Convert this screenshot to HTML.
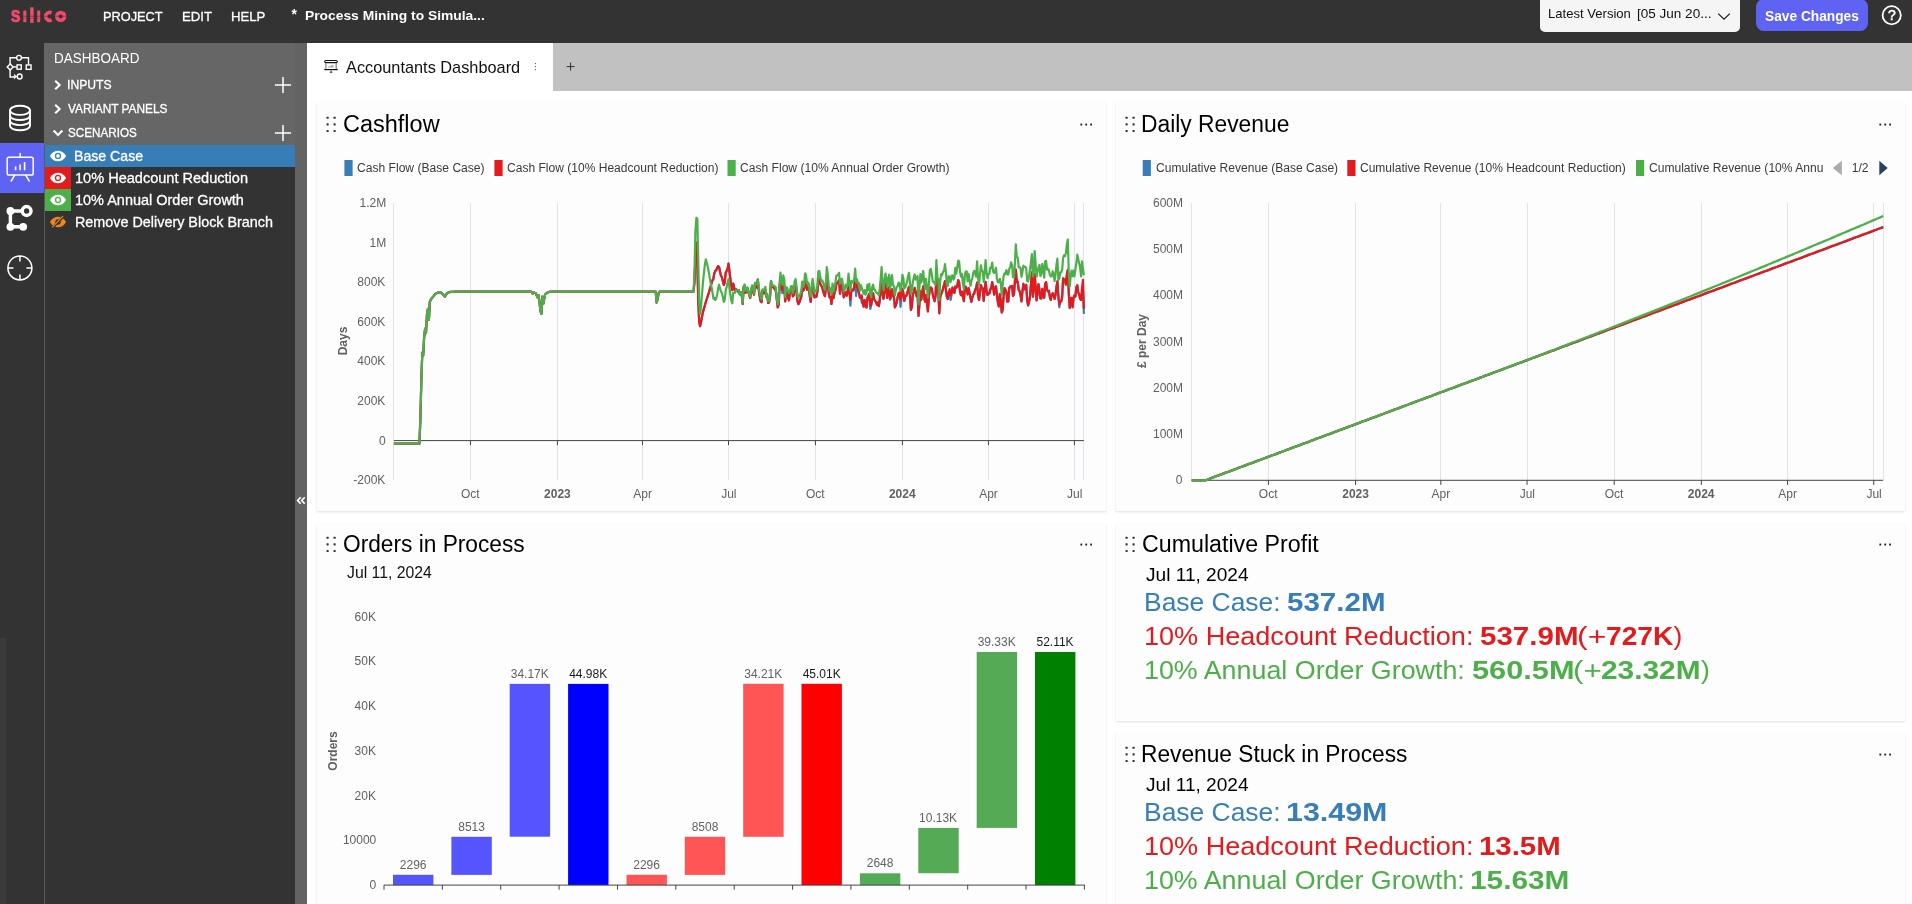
<!DOCTYPE html>
<html><head><meta charset="utf-8"><title>Accountants Dashboard</title>
<style>
html,body{margin:0;padding:0}
body{width:1912px;height:904px;overflow:hidden;position:relative;background:#fff;font-family:"Liberation Sans",sans-serif}
.box,.abs,.t,.card{position:absolute}
.t{white-space:nowrap;display:block}
.card{background:#fdfdfd;box-shadow:0 1px 2px rgba(0,0,0,0.13)}
svg{overflow:visible}
#txt{position:absolute;left:0;top:0;width:1912px;height:904px;will-change:transform}
</style></head><body>
<div class="box" style="left:0;top:0;width:1912px;height:43px;background:#333"></div>
<svg class="abs" style="left:0;top:0" width="100" height="43" viewBox="0 0 100 43">
<g fill="#f04a6e">
<text x="10.6" y="22.2" font-family="Liberation Sans" font-weight="bold" font-size="21.6" textLength="9.8" lengthAdjust="spacingAndGlyphs" stroke="#f04a6e" stroke-width="0.6">s</text>
<rect x="23.3" y="10.6" width="3.1" height="11.6"/>
<rect x="30.2" y="7.3" width="3.4" height="15.6"/>
<rect x="37.2" y="10.6" width="3.0" height="11.6"/>
</g>
<path d="M51.6 12.9 A4.0 4.0 0 1 0 51.6 19.9" fill="none" stroke="#f04a6e" stroke-width="3.6"/>
<circle cx="60.7" cy="16.4" r="3.85" fill="none" stroke="#f04a6e" stroke-width="3.7"/>
<rect x="22" y="15.85" width="46" height="0.6" fill="#333" opacity="0.85"/>
<rect x="22.8" y="18.3" width="18" height="0.45" fill="#333" opacity="0.5"/>
</svg>
<div class="box" style="left:1540px;top:-6px;width:200px;height:38px;background:#f5f5f5;border-radius:5px"></div>
<svg class="abs" style="left:1714px;top:8px" width="20" height="16" viewBox="0 0 20 16"><path d="M4.2 5.6 L10 11.2 L15.8 5.6" fill="none" stroke="#222" stroke-width="1.3"/></svg>
<div class="box" style="left:1756px;top:-1px;width:112px;height:32px;background:#5f63f3;border-radius:8px"></div>
<svg class="abs" style="left:1880px;top:3px" width="24" height="24" viewBox="0 0 24 24"><circle cx="11.7" cy="12.2" r="9.1" fill="none" stroke="#fff" stroke-width="1.8"/></svg>
<div class="box" style="left:0;top:43px;width:44px;height:861px;background:#333"></div>
<div class="box" style="left:0;top:638px;width:6px;height:266px;background:#3b3b3b"></div>
<div class="box" style="left:0;top:143px;width:44px;height:50px;background:#5f63f3"></div>
<svg class="abs" style="left:0;top:43px" width="44" height="100" viewBox="0 43 44 100" fill="none" stroke="#fff" stroke-width="1.4">
<circle cx="19" cy="57.75" r="2.4"/>
<path d="M16.6 57.75 H10.1 V64 M10.1 69.8 V77 H14.4"/>
<path d="M10.2 63.9 L13.2 66.9 L10.2 69.9 L7.2 66.9 Z"/>
<path d="M13.2 66.9 H16.8"/>
<rect x="17.05" y="64.9" width="4.2" height="4.3"/>
<path d="M21.4 57.75 H28.5 V64.6"/>
<rect x="26.25" y="64.95" width="4.8" height="4.4"/>
<ellipse cx="19.65" cy="76.5" rx="2.4" ry="2.5"/>
<path d="M14.3 74.4 V78.8 L16.9 76.6 Z" fill="#fff" stroke-width="0.6"/>
</svg>
<svg class="abs" style="left:0;top:43px" width="44" height="100" viewBox="0 43 44 100" fill="none" stroke="#fff" stroke-width="1.9">
<ellipse cx="20" cy="110.3" rx="10" ry="4.6"/>
<path d="M10 110.3 V125.6 C10 131.7 30 131.7 30 125.6 V110.3"/>
<path d="M10 115.4 C10 121.5 30 121.5 30 115.4"/>
<path d="M10 120.5 C10 126.6 30 126.6 30 120.5"/>
</svg>
<svg class="abs" style="left:0;top:143px" width="44" height="50" viewBox="0 143 44 50" fill="none" stroke="#fff" stroke-width="1.5" stroke-linecap="round">
<rect x="7.2" y="157.2" width="26" height="17.8" rx="1.8"/>
<path d="M20.2 153.4 V157"/>
<path d="M14.6 175.4 L11.2 181 M25.8 175.4 L29.2 181"/>
<path d="M15.6 170.2 V166.4 M20.1 170.2 V164.6 M24.6 170.2 V162" stroke-width="1.6" stroke-linecap="butt"/>
</svg>
<svg class="abs" style="left:0;top:193px" width="44" height="50" viewBox="0 193 44 50" fill="#fff" stroke="#fff">
<path d="M10.4 211 V226.8 H23.2 M10.4 211 H21" fill="none" stroke-width="3.4"/>
<circle cx="10.4" cy="211" r="3.9" stroke="none"/><circle cx="10.4" cy="226.8" r="3.9" stroke="none"/><circle cx="23.2" cy="226.8" r="3.9" stroke="none"/>
<circle cx="26.6" cy="211" r="4.4" fill="none" stroke-width="3.5"/>
</svg>
<svg class="abs" style="left:0;top:243px" width="44" height="50" viewBox="0 243 44 50" fill="none" stroke="#fff" stroke-width="1.5">
<circle cx="19.9" cy="267.9" r="12"/>
<path d="M19.9 256 V261.4 M19.9 274.4 V279.8 M8 267.9 H13.4 M26.4 267.9 H31.8"/>
</svg>
<div class="box" style="left:44px;top:43px;width:263px;height:861px;background:#666"></div>
<div class="box" style="left:295px;top:43px;width:12px;height:861px;background:#636363"></div>
<div class="box" style="left:44px;top:145px;width:251px;height:759px;background:#333"></div>
<div class="box" style="left:44px;top:145px;width:1px;height:759px;background:#5a5a5a"></div>
<svg class="abs" style="left:51.5px;top:78.6px" width="12" height="12" viewBox="0 0 12 12"><path d="M3.2 1.8 L7.6 6 L3.2 10.2" fill="none" stroke="#fff" stroke-width="2.1"/></svg>
<svg class="abs" style="left:274px;top:75.8px" width="18" height="18" viewBox="0 0 18 18"><path d="M9 0.9 V17.1 M0.9 9 H17.1" fill="none" stroke="#fff" stroke-width="1.5"/></svg>
<svg class="abs" style="left:51.5px;top:102.6px" width="12" height="12" viewBox="0 0 12 12"><path d="M3.2 1.8 L7.6 6 L3.2 10.2" fill="none" stroke="#fff" stroke-width="2.1"/></svg>
<svg class="abs" style="left:51.5px;top:126.6px" width="12" height="12" viewBox="0 0 12 12"><path d="M1.6 3.6 L6 8 L10.4 3.6" fill="none" stroke="#fff" stroke-width="2.1"/></svg>
<svg class="abs" style="left:274px;top:123.6px" width="18" height="18" viewBox="0 0 18 18"><path d="M9 0.9 V17.1 M0.9 9 H17.1" fill="none" stroke="#fff" stroke-width="1.5"/></svg>
<div class="box" style="left:45px;top:145px;width:250px;height:22px;background:#377eb8"></div>
<div class="box" style="left:45px;top:167px;width:26px;height:22px;background:#e41a1c"></div>
<div class="box" style="left:45px;top:189px;width:26px;height:22px;background:#4daf4a"></div>
<svg class="abs" style="left:49px;top:148px" width="18" height="16" viewBox="0 0 18 16">
<path d="M0.9 8 C3.2 4 6 2.7 9 2.7 C12 2.7 14.8 4 17.1 8 C14.8 12 12 13.3 9 13.3 C6 13.3 3.2 12 0.9 8 Z" fill="#fff"/>
<circle cx="9" cy="7.9" r="2.5" fill="none" stroke="#377eb8" stroke-width="1.3"/></svg>
<svg class="abs" style="left:49px;top:170px" width="18" height="16" viewBox="0 0 18 16">
<path d="M0.9 8 C3.2 4 6 2.7 9 2.7 C12 2.7 14.8 4 17.1 8 C14.8 12 12 13.3 9 13.3 C6 13.3 3.2 12 0.9 8 Z" fill="#fff"/>
<circle cx="9" cy="7.9" r="2.5" fill="none" stroke="#e41a1c" stroke-width="1.3"/></svg>
<svg class="abs" style="left:49px;top:192px" width="18" height="16" viewBox="0 0 18 16">
<path d="M0.9 8 C3.2 4 6 2.7 9 2.7 C12 2.7 14.8 4 17.1 8 C14.8 12 12 13.3 9 13.3 C6 13.3 3.2 12 0.9 8 Z" fill="#fff"/>
<circle cx="9" cy="7.9" r="2.5" fill="none" stroke="#4daf4a" stroke-width="1.3"/></svg>
<svg class="abs" style="left:49px;top:214px" width="18" height="16" viewBox="0 0 18 16">
<path d="M0.9 8 C3.2 4 6 2.7 9 2.7 C12 2.7 14.8 4 17.1 8 C14.8 12 12 13.3 9 13.3 C6 13.3 3.2 12 0.9 8 Z" fill="#f0861a"/>
<circle cx="9" cy="8" r="2.7" fill="#333"/>
<path d="M3.4 13.9 L14.6 2.1" stroke="#333" stroke-width="2.6"/><path d="M3.2 13.3 L14.2 1.9" stroke="#f0861a" stroke-width="1.1"/></svg>
<svg class="abs" style="left:290px;top:490px" width="20" height="20" viewBox="290 490 20 20" fill="none" stroke="#fff" stroke-width="1.7"><path d="M300.7 497.2 L297.7 500.5 L300.7 503.8 M304.7 497.2 L301.7 500.5 L304.7 503.8"/></svg>
<div class="box" style="left:307px;top:43px;width:1605px;height:48px;background:#c1c1c1"></div>
<div class="box" style="left:307px;top:43px;width:246px;height:48px;background:#fff"></div>
<svg class="abs" style="left:316px;top:52px" width="40" height="30" viewBox="316 52 40 30" fill="none">
<rect x="324.7" y="60.5" width="12.6" height="2.1" rx="1.05" stroke="#111" stroke-width="1.1"/>
<path d="M325.9 63 V69.2 M336.2 63 V69.2" stroke="#8a8a8a" stroke-width="1.3"/>
<path d="M324.3 69.6 H337.8" stroke="#111" stroke-width="1.2"/>
<path d="M328.6 67.4 V66.6 M330 67.4 V66.2 M331.4 67.4 V65.6 M332.8 67.4 V65" stroke="#999" stroke-width="1.2"/>
<path d="M331.1 70.2 L329.5 72.4 A1.7 1.1 0 0 0 332.7 72.4 Z" fill="#6a6a6a"/>
</svg>
<svg class="abs" style="left:533px;top:60px" width="5" height="14" viewBox="0 0 5 14" fill="#444"><circle cx="2.4" cy="3.6" r="0.65"/><circle cx="2.4" cy="6.6" r="0.65"/><circle cx="2.4" cy="9.6" r="0.65"/></svg>
<svg class="abs" style="left:565px;top:61px" width="12" height="12" viewBox="0 0 12 12"><path d="M5.6 1.6 V9.6 M1.6 5.6 H9.6" stroke="#222" stroke-width="0.9" fill="none"/></svg>
<div class="card" style="left:317px;top:102px;width:789px;height:409px"></div>
<div class="card" style="left:1116px;top:102px;width:789px;height:409px"></div>
<div class="card" style="left:317px;top:523px;width:789px;height:400px"></div>
<div class="card" style="left:1116px;top:523px;width:789px;height:198px"></div>
<div class="card" style="left:1116px;top:733px;width:789px;height:200px"></div>
<svg class="abs" style="left:325.6px;top:116px" width="11" height="17" viewBox="0 0 11 17" fill="#333"><rect x="0.55" y="0.75" width="2.1" height="2.1" rx="0.4"/><rect x="0.55" y="7.3500000000000005" width="2.1" height="2.1" rx="0.4"/><rect x="0.55" y="13.95" width="2.1" height="2.1" rx="0.4"/><rect x="7.55" y="0.75" width="2.1" height="2.1" rx="0.4"/><rect x="7.55" y="7.3500000000000005" width="2.1" height="2.1" rx="0.4"/><rect x="7.55" y="13.95" width="2.1" height="2.1" rx="0.4"/></svg>
<svg class="abs" style="left:1080.0px;top:122.7px" width="14" height="4" viewBox="0 0 14 4" fill="#222"><rect x="0.4" y="0.6" width="1.8" height="1.9"/><rect x="5.3" y="0.6" width="1.8" height="1.9"/><rect x="10.2" y="0.6" width="1.8" height="1.9"/></svg>
<svg class="abs" style="left:1124.6px;top:116px" width="11" height="17" viewBox="0 0 11 17" fill="#333"><rect x="0.55" y="0.75" width="2.1" height="2.1" rx="0.4"/><rect x="0.55" y="7.3500000000000005" width="2.1" height="2.1" rx="0.4"/><rect x="0.55" y="13.95" width="2.1" height="2.1" rx="0.4"/><rect x="7.55" y="0.75" width="2.1" height="2.1" rx="0.4"/><rect x="7.55" y="7.3500000000000005" width="2.1" height="2.1" rx="0.4"/><rect x="7.55" y="13.95" width="2.1" height="2.1" rx="0.4"/></svg>
<svg class="abs" style="left:1879.4px;top:122.7px" width="14" height="4" viewBox="0 0 14 4" fill="#222"><rect x="0.4" y="0.6" width="1.8" height="1.9"/><rect x="5.3" y="0.6" width="1.8" height="1.9"/><rect x="10.2" y="0.6" width="1.8" height="1.9"/></svg>
<svg class="abs" style="left:325.6px;top:536px" width="11" height="17" viewBox="0 0 11 17" fill="#333"><rect x="0.55" y="0.75" width="2.1" height="2.1" rx="0.4"/><rect x="0.55" y="7.3500000000000005" width="2.1" height="2.1" rx="0.4"/><rect x="0.55" y="13.95" width="2.1" height="2.1" rx="0.4"/><rect x="7.55" y="0.75" width="2.1" height="2.1" rx="0.4"/><rect x="7.55" y="7.3500000000000005" width="2.1" height="2.1" rx="0.4"/><rect x="7.55" y="13.95" width="2.1" height="2.1" rx="0.4"/></svg>
<svg class="abs" style="left:1080.0px;top:542.7px" width="14" height="4" viewBox="0 0 14 4" fill="#222"><rect x="0.4" y="0.6" width="1.8" height="1.9"/><rect x="5.3" y="0.6" width="1.8" height="1.9"/><rect x="10.2" y="0.6" width="1.8" height="1.9"/></svg>
<svg class="abs" style="left:1124.6px;top:536px" width="11" height="17" viewBox="0 0 11 17" fill="#333"><rect x="0.55" y="0.75" width="2.1" height="2.1" rx="0.4"/><rect x="0.55" y="7.3500000000000005" width="2.1" height="2.1" rx="0.4"/><rect x="0.55" y="13.95" width="2.1" height="2.1" rx="0.4"/><rect x="7.55" y="0.75" width="2.1" height="2.1" rx="0.4"/><rect x="7.55" y="7.3500000000000005" width="2.1" height="2.1" rx="0.4"/><rect x="7.55" y="13.95" width="2.1" height="2.1" rx="0.4"/></svg>
<svg class="abs" style="left:1879.4px;top:542.7px" width="14" height="4" viewBox="0 0 14 4" fill="#222"><rect x="0.4" y="0.6" width="1.8" height="1.9"/><rect x="5.3" y="0.6" width="1.8" height="1.9"/><rect x="10.2" y="0.6" width="1.8" height="1.9"/></svg>
<svg class="abs" style="left:1124.6px;top:746px" width="11" height="17" viewBox="0 0 11 17" fill="#333"><rect x="0.55" y="0.75" width="2.1" height="2.1" rx="0.4"/><rect x="0.55" y="7.3500000000000005" width="2.1" height="2.1" rx="0.4"/><rect x="0.55" y="13.95" width="2.1" height="2.1" rx="0.4"/><rect x="7.55" y="0.75" width="2.1" height="2.1" rx="0.4"/><rect x="7.55" y="7.3500000000000005" width="2.1" height="2.1" rx="0.4"/><rect x="7.55" y="13.95" width="2.1" height="2.1" rx="0.4"/></svg>
<svg class="abs" style="left:1879.4px;top:752.7px" width="14" height="4" viewBox="0 0 14 4" fill="#222"><rect x="0.4" y="0.6" width="1.8" height="1.9"/><rect x="5.3" y="0.6" width="1.8" height="1.9"/><rect x="10.2" y="0.6" width="1.8" height="1.9"/></svg>
<svg class="abs" style="left:317px;top:102px" width="789" height="409" viewBox="317 102 789 409">
<rect x="344.4" y="160" width="8.2" height="16" fill="#377eb8"/>
<rect x="494.4" y="160" width="8.2" height="16" fill="#e41a1c"/>
<rect x="727.5" y="160" width="8.2" height="16" fill="#4daf4a"/>
<path d="M393.5 203 V480.3" stroke="#e1e3e8" stroke-width="1"/>
<path d="M470.5 203 V480.3" stroke="#e1e3e8" stroke-width="1"/>
<path d="M557.5 203 V480.3" stroke="#e1e3e8" stroke-width="1"/>
<path d="M642.5 203 V480.3" stroke="#e1e3e8" stroke-width="1"/>
<path d="M728.5 203 V480.3" stroke="#e1e3e8" stroke-width="1"/>
<path d="M815.5 203 V480.3" stroke="#e1e3e8" stroke-width="1"/>
<path d="M902.5 203 V480.3" stroke="#e1e3e8" stroke-width="1"/>
<path d="M988.5 203 V480.3" stroke="#e1e3e8" stroke-width="1"/>
<path d="M1074.5 203 V480.3" stroke="#e1e3e8" stroke-width="1"/>
<path d="M1083.5 203 V480.3" stroke="#e1e3e8" stroke-width="1"/>
<path d="M393.9 440.6 H1083.9" stroke="#444" stroke-width="1"/>
<path d="M470.46 440.6 V445.20000000000005" stroke="#444" stroke-width="1"/>
<path d="M557.42 440.6 V445.20000000000005" stroke="#444" stroke-width="1"/>
<path d="M642.49 440.6 V445.20000000000005" stroke="#444" stroke-width="1"/>
<path d="M728.50 440.6 V445.20000000000005" stroke="#444" stroke-width="1"/>
<path d="M815.46 440.6 V445.20000000000005" stroke="#444" stroke-width="1"/>
<path d="M902.42 440.6 V445.20000000000005" stroke="#444" stroke-width="1"/>
<path d="M988.43 440.6 V445.20000000000005" stroke="#444" stroke-width="1"/>
<path d="M1074.44 440.6 V445.20000000000005" stroke="#444" stroke-width="1"/>
<polyline points="393.9,443.6 394.8,443.6 395.8,443.6 396.7,443.6 397.7,443.6 398.6,443.6 399.6,443.6 400.5,443.6 401.5,443.6 402.4,443.6 403.4,443.6 404.3,443.6 405.2,443.6 406.2,443.6 407.1,443.6 408.1,443.6 409.0,443.6 410.0,443.6 410.9,443.6 411.9,443.6 412.8,443.6 413.7,443.6 414.7,443.6 415.6,443.6 416.6,443.6 417.5,443.6 418.5,443.6 419.4,443.6 420.4,418.8 421.3,381.2 422.3,352.5 423.2,355.5 424.1,337.6 425.1,328.7 426.0,332.7 427.0,313.9 427.9,308.9 428.9,319.8 429.8,302.0 430.8,299.6 431.7,298.4 432.7,297.2 433.6,296.1 434.5,294.9 435.5,293.7 436.4,293.3 437.4,292.9 438.3,292.5 439.3,292.6 440.2,292.6 441.2,292.7 442.1,293.6 443.1,294.5 444.0,295.6 444.9,296.7 445.9,294.5 446.8,293.6 447.8,292.7 448.7,292.4 449.7,292.2 450.6,291.9 451.6,291.9 452.5,291.8 453.4,291.8 454.4,291.7 455.3,291.7 456.3,291.7 457.2,291.7 458.2,291.7 459.1,291.7 460.1,291.7 461.0,291.7 462.0,291.7 462.9,291.7 463.8,291.7 464.8,291.7 465.7,291.7 466.7,291.7 467.6,291.7 468.6,291.7 469.5,291.7 470.5,291.7 471.4,291.7 472.4,291.7 473.3,291.7 474.2,291.7 475.2,291.7 476.1,291.7 477.1,291.7 478.0,291.7 479.0,291.7 479.9,291.7 480.9,291.7 481.8,291.7 482.7,291.7 483.7,291.7 484.6,291.7 485.6,291.7 486.5,291.7 487.5,291.7 488.4,291.7 489.4,291.7 490.3,291.7 491.3,291.7 492.2,291.7 493.1,291.7 494.1,291.7 495.0,291.7 496.0,291.7 496.9,291.7 497.9,291.7 498.8,291.7 499.8,291.7 500.7,291.7 501.7,291.7 502.6,291.7 503.5,291.7 504.5,291.7 505.4,291.7 506.4,291.7 507.3,291.7 508.3,291.7 509.2,291.7 510.2,291.7 511.1,291.7 512.0,291.7 513.0,291.7 513.9,291.7 514.9,291.7 515.8,291.7 516.8,291.7 517.7,291.7 518.7,291.7 519.6,291.7 520.6,291.7 521.5,291.7 522.4,291.7 523.4,291.7 524.3,291.7 525.3,291.7 526.2,291.7 527.2,291.7 528.1,291.7 529.1,291.7 530.0,291.7 531.0,291.7 531.9,292.1 532.8,293.7 533.8,292.5 534.7,292.8 535.7,293.1 536.6,295.4 537.6,297.6 538.5,295.1 539.5,302.0 540.4,310.9 541.4,313.9 542.3,296.5 543.2,304.0 544.2,299.0 545.1,294.5 546.1,293.6 547.0,292.7 548.0,292.4 548.9,292.0 549.9,291.7 550.8,291.7 551.7,291.7 552.7,291.7 553.6,291.7 554.6,291.7 555.5,291.7 556.5,291.7 557.4,291.7 558.4,291.7 559.3,291.7 560.3,291.7 561.2,291.7 562.1,291.7 563.1,291.7 564.0,291.7 565.0,291.7 565.9,291.7 566.9,291.7 567.8,291.7 568.8,291.7 569.7,291.7 570.7,291.7 571.6,291.7 572.5,291.7 573.5,291.7 574.4,291.7 575.4,291.7 576.3,291.7 577.3,291.7 578.2,291.7 579.2,291.7 580.1,291.7 581.0,291.7 582.0,291.7 582.9,291.7 583.9,291.7 584.8,291.7 585.8,291.7 586.7,291.7 587.7,291.7 588.6,291.7 589.6,291.7 590.5,291.7 591.4,291.7 592.4,291.7 593.3,291.7 594.3,291.7 595.2,291.7 596.2,291.7 597.1,291.7 598.1,291.7 599.0,291.7 600.0,291.7 600.9,291.7 601.8,291.7 602.8,291.7 603.7,291.7 604.7,291.7 605.6,291.7 606.6,291.7 607.5,291.7 608.5,291.7 609.4,291.7 610.4,291.7 611.3,291.7 612.2,291.7 613.2,291.7 614.1,291.7 615.1,291.7 616.0,291.7 617.0,291.7 617.9,291.7 618.9,291.7 619.8,291.7 620.7,291.7 621.7,291.7 622.6,291.7 623.6,291.7 624.5,291.7 625.5,291.7 626.4,291.7 627.4,291.7 628.3,291.7 629.3,291.7 630.2,291.7 631.1,291.7 632.1,291.7 633.0,291.7 634.0,291.7 634.9,291.7 635.9,291.7 636.8,291.7 637.8,291.7 638.7,291.7 639.7,291.7 640.6,291.7 641.5,291.7 642.5,291.7 643.4,291.7 644.4,291.7 645.3,291.7 646.3,291.7 647.2,291.7 648.2,291.7 649.1,291.7 650.0,291.7 651.0,291.7 651.9,291.7 652.9,291.7 653.8,291.7 654.8,291.7 655.7,291.7 656.7,302.6 657.6,299.0 658.6,293.1 659.5,291.7 660.4,291.7 661.4,291.7 662.3,291.7 663.3,291.7 664.2,291.7 665.2,291.7 666.1,291.7 667.1,291.7 668.0,291.7 669.0,291.7 669.9,291.7 670.8,291.7 671.8,291.7 672.7,291.7 673.7,291.7 674.6,291.7 675.6,291.7 676.5,291.7 677.5,291.7 678.4,291.7 679.4,291.7 680.3,291.7 681.2,291.7 682.2,291.7 683.1,291.7 684.1,291.7 685.0,291.7 686.0,291.7 686.9,291.7 687.9,291.7 688.8,291.7 689.7,291.7 690.7,291.7 691.6,291.7 692.6,291.7 693.5,291.7 694.5,282.2 695.4,254.5 696.4,242.6 697.3,262.4 698.3,302.0 699.2,321.8 700.1,326.2 701.1,321.8 702.0,316.9 703.0,311.9 703.9,308.6 704.9,305.3 705.8,302.0 706.8,299.0 707.7,296.1 708.7,293.1 709.6,290.1 710.5,287.0 711.5,283.4 712.4,280.3 713.4,278.8 714.3,273.3 715.3,270.8 716.2,270.3 717.2,267.7 718.1,266.2 719.0,266.8 720.0,271.4 720.9,275.5 721.9,277.2 722.8,280.9 723.8,285.0 724.7,282.6 725.7,272.6 726.6,271.0 727.6,268.6 728.5,263.7 729.4,270.6 730.4,279.2 731.3,286.4 732.3,290.1 733.2,283.6 734.2,287.6 735.1,290.6 736.1,289.4 737.0,289.7 738.0,292.1 738.9,290.1 739.8,294.2 740.8,292.3 741.7,294.4 742.7,304.0 743.6,287.2 744.6,286.1 745.5,292.9 746.5,291.5 747.4,288.4 748.3,291.6 749.3,295.4 750.2,297.8 751.2,290.0 752.1,287.6 753.1,291.8 754.0,294.6 755.0,283.9 755.9,286.5 756.9,287.6 757.8,279.7 758.7,289.3 759.7,296.4 760.6,301.1 761.6,302.1 762.5,290.6 763.5,292.3 764.4,293.4 765.4,289.9 766.3,296.6 767.3,296.1 768.2,303.0 769.1,302.1 770.1,296.1 771.0,281.4 772.0,286.0 772.9,287.2 773.9,287.6 774.8,289.2 775.8,290.3 776.7,298.5 777.7,307.3 778.6,305.1 779.5,288.5 780.5,277.3 781.4,286.4 782.4,293.2 783.3,281.6 784.3,286.1 785.2,301.5 786.2,290.8 787.1,293.1 788.0,297.7 789.0,300.3 789.9,293.0 790.9,289.1 791.8,286.6 792.8,296.3 793.7,295.4 794.7,285.9 795.6,283.8 796.6,293.0 797.5,301.5 798.4,304.1 799.4,302.3 800.3,299.6 801.3,296.8 802.2,287.2 803.2,290.6 804.1,289.3 805.1,280.4 806.0,280.9 807.0,289.6 807.9,289.4 808.8,287.9 809.8,296.1 810.7,301.9 811.7,290.6 812.6,284.7 813.6,290.0 814.5,297.3 815.5,297.0 816.4,296.9 817.3,292.4 818.3,281.6 819.2,278.5 820.2,283.3 821.1,285.7 822.1,286.7 823.0,290.6 824.0,294.0 824.9,296.2 825.9,288.5 826.8,276.4 827.7,282.1 828.7,292.8 829.6,297.4 830.6,297.0 831.5,304.0 832.5,291.8 833.4,298.2 834.4,293.4 835.3,290.5 836.3,284.0 837.2,283.2 838.1,281.9 839.1,280.2 840.0,293.7 841.0,287.9 841.9,283.2 842.9,288.6 843.8,297.3 844.8,293.4 845.7,292.1 846.7,295.8 847.6,292.5 848.5,280.9 849.5,292.1 850.4,305.6 851.4,289.8 852.3,289.9 853.3,290.4 854.2,286.5 855.2,278.7 856.1,296.0 857.0,285.0 858.0,289.9 858.9,292.5 859.9,297.6 860.8,296.3 861.8,302.7 862.7,303.4 863.7,306.6 864.6,300.2 865.6,305.9 866.5,307.6 867.4,298.7 868.4,295.9 869.3,293.7 870.3,308.9 871.2,305.1 872.2,299.1 873.1,293.3 874.1,299.2 875.0,300.8 876.0,301.9 876.9,304.7 877.8,302.6 878.8,306.2 879.7,302.6 880.7,288.5 881.6,282.5 882.6,294.8 883.5,298.8 884.5,291.5 885.4,283.7 886.3,288.7 887.3,297.9 888.2,290.8 889.2,286.8 890.1,299.3 891.1,297.3 892.0,289.4 893.0,296.0 893.9,296.5 894.9,307.4 895.8,305.5 896.7,302.5 897.7,296.9 898.6,293.6 899.6,292.5 900.5,306.8 901.5,296.6 902.4,290.6 903.4,293.2 904.3,301.0 905.3,296.0 906.2,296.1 907.1,293.6 908.1,289.7 909.0,286.8 910.0,296.2 910.9,310.0 911.9,306.6 912.8,294.6 913.8,292.1 914.7,287.9 915.7,292.3 916.6,296.2 917.5,292.7 918.5,316.0 919.4,304.3 920.4,291.3 921.3,299.7 922.3,292.6 923.2,286.3 924.2,299.2 925.1,301.7 926.0,295.1 927.0,303.6 927.9,311.3 928.9,297.1 929.8,288.5 930.8,287.4 931.7,288.4 932.7,294.3 933.6,298.0 934.6,301.3 935.5,296.1 936.4,275.0 937.4,293.8 938.3,291.7 939.3,313.3 940.2,297.5 941.2,294.0 942.1,291.9 943.1,288.4 944.0,285.1 945.0,281.0 945.9,289.6 946.8,296.5 947.8,299.0 948.7,292.6 949.7,292.0 950.6,300.0 951.6,294.8 952.5,287.5 953.5,292.0 954.4,292.9 955.3,286.5 956.3,287.6 957.2,287.0 958.2,280.2 959.1,282.2 960.1,292.3 961.0,295.2 962.0,291.5 962.9,296.7 963.9,301.1 964.8,288.3 965.7,286.6 966.7,290.0 967.6,294.3 968.6,288.0 969.5,292.7 970.5,297.7 971.4,301.8 972.4,297.3 973.3,294.5 974.3,294.2 975.2,289.6 976.1,288.2 977.1,282.7 978.0,295.4 979.0,300.0 979.9,293.4 980.9,285.2 981.8,288.0 982.8,288.5 983.7,300.9 984.6,291.7 985.6,281.9 986.5,289.7 987.5,295.0 988.4,293.2 989.4,293.4 990.3,289.7 991.3,287.5 992.2,282.2 993.2,287.6 994.1,294.5 995.0,288.1 996.0,286.3 996.9,295.0 997.9,302.7 998.8,306.4 999.8,294.0 1000.7,299.5 1001.7,312.5 1002.6,310.1 1003.6,296.4 1004.5,288.1 1005.4,289.6 1006.4,292.1 1007.3,301.6 1008.3,301.5 1009.2,288.3 1010.2,286.5 1011.1,287.4 1012.1,285.9 1013.0,295.8 1014.0,294.7 1014.9,281.1 1015.8,269.7 1016.8,282.2 1017.7,281.7 1018.7,290.0 1019.6,291.0 1020.6,295.5 1021.5,301.3 1022.5,290.9 1023.4,283.8 1024.3,289.5 1025.3,287.9 1026.2,284.8 1027.2,300.6 1028.1,305.4 1029.1,301.8 1030.0,296.5 1031.0,283.6 1031.9,272.4 1032.9,296.7 1033.8,288.9 1034.7,274.1 1035.7,288.5 1036.6,300.3 1037.6,288.2 1038.5,284.2 1039.5,296.1 1040.4,298.3 1041.4,298.4 1042.3,288.9 1043.3,292.9 1044.2,297.8 1045.1,284.1 1046.1,282.1 1047.0,290.0 1048.0,291.5 1048.9,290.7 1049.9,297.4 1050.8,299.9 1051.8,295.1 1052.7,293.3 1053.6,295.0 1054.6,299.0 1055.5,295.0 1056.5,286.6 1057.4,281.4 1058.4,296.5 1059.3,307.2 1060.3,301.6 1061.2,301.5 1062.2,296.5 1063.1,278.3 1064.0,280.1 1065.0,281.7 1065.9,284.6 1066.9,274.3 1067.8,269.9 1068.8,293.6 1069.7,307.9 1070.7,304.1 1071.6,298.4 1072.6,307.4 1073.5,298.2 1074.4,295.4 1075.4,296.5 1076.3,287.5 1077.3,285.3 1078.2,292.6 1079.2,294.2 1080.1,298.9 1081.1,299.9 1082.0,293.3 1083.0,290.9 1083.9,313.9" fill="none" stroke="#377eb8" stroke-width="2.2" stroke-linejoin="round"/>
<polyline points="393.9,443.6 394.8,443.6 395.8,443.6 396.7,443.6 397.7,443.6 398.6,443.6 399.6,443.6 400.5,443.6 401.5,443.6 402.4,443.6 403.4,443.6 404.3,443.6 405.2,443.6 406.2,443.6 407.1,443.6 408.1,443.6 409.0,443.6 410.0,443.6 410.9,443.6 411.9,443.6 412.8,443.6 413.7,443.6 414.7,443.6 415.6,443.6 416.6,443.6 417.5,443.6 418.5,443.6 419.4,443.6 420.4,418.8 421.3,381.2 422.3,352.5 423.2,355.5 424.1,337.6 425.1,328.7 426.0,332.7 427.0,313.9 427.9,308.9 428.9,319.8 429.8,302.0 430.8,299.6 431.7,298.4 432.7,297.2 433.6,296.1 434.5,294.9 435.5,293.7 436.4,293.3 437.4,292.9 438.3,292.5 439.3,292.6 440.2,292.6 441.2,292.7 442.1,293.6 443.1,294.5 444.0,295.6 444.9,296.7 445.9,294.5 446.8,293.6 447.8,292.7 448.7,292.4 449.7,292.2 450.6,291.9 451.6,291.9 452.5,291.8 453.4,291.8 454.4,291.7 455.3,291.7 456.3,291.7 457.2,291.7 458.2,291.7 459.1,291.7 460.1,291.7 461.0,291.7 462.0,291.7 462.9,291.7 463.8,291.7 464.8,291.7 465.7,291.7 466.7,291.7 467.6,291.7 468.6,291.7 469.5,291.7 470.5,291.7 471.4,291.7 472.4,291.7 473.3,291.7 474.2,291.7 475.2,291.7 476.1,291.7 477.1,291.7 478.0,291.7 479.0,291.7 479.9,291.7 480.9,291.7 481.8,291.7 482.7,291.7 483.7,291.7 484.6,291.7 485.6,291.7 486.5,291.7 487.5,291.7 488.4,291.7 489.4,291.7 490.3,291.7 491.3,291.7 492.2,291.7 493.1,291.7 494.1,291.7 495.0,291.7 496.0,291.7 496.9,291.7 497.9,291.7 498.8,291.7 499.8,291.7 500.7,291.7 501.7,291.7 502.6,291.7 503.5,291.7 504.5,291.7 505.4,291.7 506.4,291.7 507.3,291.7 508.3,291.7 509.2,291.7 510.2,291.7 511.1,291.7 512.0,291.7 513.0,291.7 513.9,291.7 514.9,291.7 515.8,291.7 516.8,291.7 517.7,291.7 518.7,291.7 519.6,291.7 520.6,291.7 521.5,291.7 522.4,291.7 523.4,291.7 524.3,291.7 525.3,291.7 526.2,291.7 527.2,291.7 528.1,291.7 529.1,291.7 530.0,291.7 531.0,291.7 531.9,292.1 532.8,293.7 533.8,292.5 534.7,292.8 535.7,293.1 536.6,295.4 537.6,297.6 538.5,295.1 539.5,302.0 540.4,310.9 541.4,313.9 542.3,296.5 543.2,304.0 544.2,299.0 545.1,294.5 546.1,293.6 547.0,292.7 548.0,292.4 548.9,292.0 549.9,291.7 550.8,291.7 551.7,291.7 552.7,291.7 553.6,291.7 554.6,291.7 555.5,291.7 556.5,291.7 557.4,291.7 558.4,291.7 559.3,291.7 560.3,291.7 561.2,291.7 562.1,291.7 563.1,291.7 564.0,291.7 565.0,291.7 565.9,291.7 566.9,291.7 567.8,291.7 568.8,291.7 569.7,291.7 570.7,291.7 571.6,291.7 572.5,291.7 573.5,291.7 574.4,291.7 575.4,291.7 576.3,291.7 577.3,291.7 578.2,291.7 579.2,291.7 580.1,291.7 581.0,291.7 582.0,291.7 582.9,291.7 583.9,291.7 584.8,291.7 585.8,291.7 586.7,291.7 587.7,291.7 588.6,291.7 589.6,291.7 590.5,291.7 591.4,291.7 592.4,291.7 593.3,291.7 594.3,291.7 595.2,291.7 596.2,291.7 597.1,291.7 598.1,291.7 599.0,291.7 600.0,291.7 600.9,291.7 601.8,291.7 602.8,291.7 603.7,291.7 604.7,291.7 605.6,291.7 606.6,291.7 607.5,291.7 608.5,291.7 609.4,291.7 610.4,291.7 611.3,291.7 612.2,291.7 613.2,291.7 614.1,291.7 615.1,291.7 616.0,291.7 617.0,291.7 617.9,291.7 618.9,291.7 619.8,291.7 620.7,291.7 621.7,291.7 622.6,291.7 623.6,291.7 624.5,291.7 625.5,291.7 626.4,291.7 627.4,291.7 628.3,291.7 629.3,291.7 630.2,291.7 631.1,291.7 632.1,291.7 633.0,291.7 634.0,291.7 634.9,291.7 635.9,291.7 636.8,291.7 637.8,291.7 638.7,291.7 639.7,291.7 640.6,291.7 641.5,291.7 642.5,291.7 643.4,291.7 644.4,291.7 645.3,291.7 646.3,291.7 647.2,291.7 648.2,291.7 649.1,291.7 650.0,291.7 651.0,291.7 651.9,291.7 652.9,291.7 653.8,291.7 654.8,291.7 655.7,291.7 656.7,302.6 657.6,299.0 658.6,293.1 659.5,291.7 660.4,291.7 661.4,291.7 662.3,291.7 663.3,291.7 664.2,291.7 665.2,291.7 666.1,291.7 667.1,291.7 668.0,291.7 669.0,291.7 669.9,291.7 670.8,291.7 671.8,291.7 672.7,291.7 673.7,291.7 674.6,291.7 675.6,291.7 676.5,291.7 677.5,291.7 678.4,291.7 679.4,291.7 680.3,291.7 681.2,291.7 682.2,291.7 683.1,291.7 684.1,291.7 685.0,291.7 686.0,291.7 686.9,291.7 687.9,291.7 688.8,291.7 689.7,291.7 690.7,291.7 691.6,291.7 692.6,291.7 693.5,291.7 694.5,282.2 695.4,254.5 696.4,242.6 697.3,262.4 698.3,302.0 699.2,321.8 700.1,326.2 701.1,321.8 702.0,316.9 703.0,311.9 703.9,308.6 704.9,305.3 705.8,302.0 706.8,299.0 707.7,296.1 708.7,293.1 709.6,290.1 710.5,287.0 711.5,283.4 712.4,280.3 713.4,278.8 714.3,273.3 715.3,270.8 716.2,270.3 717.2,267.7 718.1,266.2 719.0,266.8 720.0,271.4 720.9,275.5 721.9,277.2 722.8,280.9 723.8,285.0 724.7,282.6 725.7,272.6 726.6,271.0 727.6,268.6 728.5,263.7 729.4,270.6 730.4,279.2 731.3,286.4 732.3,290.1 733.2,283.6 734.2,287.6 735.1,290.6 736.1,289.4 737.0,289.7 738.0,290.7 738.9,290.1 739.8,294.2 740.8,292.3 741.7,294.4 742.7,304.0 743.6,287.2 744.6,286.1 745.5,292.9 746.5,291.5 747.4,288.4 748.3,291.6 749.3,295.4 750.2,297.8 751.2,290.0 752.1,287.6 753.1,291.8 754.0,294.6 755.0,283.9 755.9,286.5 756.9,287.6 757.8,279.7 758.7,289.3 759.7,296.4 760.6,301.1 761.6,302.1 762.5,290.6 763.5,292.3 764.4,293.4 765.4,289.9 766.3,296.6 767.3,296.1 768.2,303.0 769.1,302.1 770.1,296.1 771.0,281.4 772.0,286.0 772.9,287.2 773.9,287.6 774.8,289.2 775.8,290.3 776.7,298.5 777.7,307.3 778.6,305.1 779.5,288.5 780.5,277.3 781.4,286.4 782.4,290.0 783.3,281.6 784.3,286.1 785.2,301.5 786.2,290.8 787.1,293.1 788.0,297.7 789.0,300.3 789.9,293.0 790.9,289.1 791.8,286.6 792.8,296.3 793.7,295.4 794.7,285.9 795.6,283.8 796.6,293.0 797.5,301.5 798.4,304.1 799.4,302.3 800.3,299.6 801.3,296.8 802.2,287.2 803.2,290.6 804.1,289.3 805.1,280.4 806.0,280.9 807.0,289.6 807.9,289.4 808.8,287.9 809.8,296.1 810.7,301.9 811.7,290.6 812.6,284.7 813.6,290.0 814.5,297.3 815.5,297.0 816.4,296.9 817.3,292.4 818.3,281.6 819.2,278.5 820.2,283.3 821.1,285.7 822.1,286.7 823.0,290.6 824.0,294.0 824.9,296.2 825.9,288.5 826.8,276.4 827.7,282.1 828.7,292.8 829.6,297.4 830.6,297.0 831.5,304.0 832.5,291.8 833.4,298.2 834.4,293.4 835.3,290.5 836.3,284.0 837.2,283.2 838.1,281.9 839.1,280.2 840.0,293.7 841.0,287.9 841.9,283.2 842.9,288.6 843.8,297.3 844.8,293.4 845.7,292.1 846.7,295.8 847.6,292.5 848.5,280.9 849.5,292.1 850.4,299.5 851.4,289.8 852.3,289.9 853.3,290.4 854.2,286.5 855.2,278.7 856.1,286.7 857.0,285.0 858.0,289.9 858.9,292.5 859.9,297.6 860.8,296.3 861.8,295.4 862.7,303.4 863.7,306.6 864.6,300.2 865.6,305.9 866.5,307.6 867.4,297.6 868.4,295.9 869.3,293.7 870.3,305.6 871.2,305.1 872.2,298.2 873.1,293.3 874.1,299.2 875.0,300.8 876.0,301.9 876.9,304.7 877.8,302.6 878.8,306.2 879.7,298.7 880.7,288.5 881.6,282.5 882.6,294.8 883.5,298.8 884.5,291.5 885.4,283.7 886.3,288.7 887.3,297.9 888.2,290.8 889.2,286.8 890.1,299.3 891.1,293.7 892.0,289.4 893.0,296.0 893.9,296.5 894.9,307.4 895.8,305.5 896.7,302.5 897.7,296.9 898.6,293.6 899.6,292.5 900.5,299.7 901.5,296.6 902.4,288.8 903.4,293.2 904.3,301.0 905.3,296.0 906.2,296.1 907.1,293.6 908.1,289.7 909.0,286.8 910.0,296.2 910.9,310.0 911.9,306.6 912.8,294.6 913.8,292.1 914.7,287.9 915.7,292.3 916.6,296.2 917.5,291.8 918.5,316.0 919.4,304.3 920.4,291.3 921.3,299.7 922.3,292.6 923.2,286.3 924.2,294.9 925.1,301.7 926.0,295.1 927.0,303.6 927.9,311.3 928.9,297.1 929.8,288.5 930.8,287.4 931.7,288.4 932.7,294.3 933.6,298.0 934.6,301.3 935.5,296.1 936.4,275.0 937.4,291.8 938.3,291.7 939.3,313.3 940.2,297.5 941.2,294.0 942.1,291.9 943.1,288.4 944.0,285.1 945.0,281.0 945.9,289.6 946.8,296.5 947.8,299.0 948.7,292.6 949.7,289.2 950.6,294.9 951.6,292.1 952.5,287.5 953.5,292.0 954.4,292.9 955.3,286.5 956.3,287.6 957.2,285.9 958.2,280.2 959.1,282.2 960.1,292.3 961.0,295.2 962.0,291.5 962.9,296.7 963.9,301.1 964.8,288.3 965.7,286.6 966.7,290.0 967.6,294.3 968.6,288.0 969.5,292.7 970.5,297.7 971.4,301.8 972.4,297.3 973.3,294.5 974.3,292.8 975.2,289.6 976.1,288.2 977.1,282.7 978.0,295.4 979.0,300.0 979.9,293.4 980.9,285.2 981.8,288.0 982.8,288.5 983.7,300.9 984.6,290.8 985.6,281.9 986.5,289.7 987.5,295.0 988.4,293.2 989.4,293.4 990.3,289.7 991.3,287.5 992.2,282.2 993.2,287.6 994.1,294.5 995.0,288.1 996.0,286.3 996.9,295.0 997.9,302.7 998.8,306.4 999.8,294.0 1000.7,299.5 1001.7,312.5 1002.6,310.1 1003.6,296.4 1004.5,288.1 1005.4,289.6 1006.4,292.1 1007.3,301.6 1008.3,301.5 1009.2,288.3 1010.2,286.5 1011.1,287.4 1012.1,285.9 1013.0,295.8 1014.0,294.2 1014.9,281.1 1015.8,269.7 1016.8,282.2 1017.7,281.7 1018.7,290.0 1019.6,291.0 1020.6,295.5 1021.5,301.3 1022.5,290.9 1023.4,283.8 1024.3,289.5 1025.3,287.9 1026.2,284.8 1027.2,300.6 1028.1,305.4 1029.1,301.8 1030.0,296.5 1031.0,283.6 1031.9,272.4 1032.9,296.7 1033.8,288.9 1034.7,274.1 1035.7,288.5 1036.6,300.3 1037.6,288.2 1038.5,284.2 1039.5,289.0 1040.4,298.3 1041.4,298.4 1042.3,288.9 1043.3,292.9 1044.2,297.8 1045.1,284.1 1046.1,282.1 1047.0,290.0 1048.0,291.5 1048.9,290.7 1049.9,297.4 1050.8,299.9 1051.8,295.1 1052.7,293.3 1053.6,295.0 1054.6,299.0 1055.5,295.0 1056.5,286.6 1057.4,281.4 1058.4,296.5 1059.3,304.5 1060.3,301.6 1061.2,301.5 1062.2,296.5 1063.1,278.3 1064.0,280.1 1065.0,279.6 1065.9,284.6 1066.9,274.3 1067.8,269.9 1068.8,293.6 1069.7,307.9 1070.7,298.2 1071.6,297.7 1072.6,307.2 1073.5,298.2 1074.4,295.4 1075.4,296.5 1076.3,287.5 1077.3,285.3 1078.2,292.6 1079.2,294.2 1080.1,298.9 1081.1,299.9 1082.0,288.1 1083.0,279.8 1083.9,308.9" fill="none" stroke="#e41a1c" stroke-width="2.2" stroke-linejoin="round"/>
<polyline points="393.9,443.6 394.8,443.6 395.8,443.6 396.7,443.6 397.7,443.6 398.6,443.6 399.6,443.6 400.5,443.6 401.5,443.6 402.4,443.6 403.4,443.6 404.3,443.6 405.2,443.6 406.2,443.6 407.1,443.6 408.1,443.6 409.0,443.6 410.0,443.6 410.9,443.6 411.9,443.6 412.8,443.6 413.7,443.6 414.7,443.6 415.6,443.6 416.6,443.6 417.5,443.6 418.5,443.6 419.4,443.6 420.4,418.8 421.3,381.2 422.3,352.5 423.2,355.5 424.1,337.6 425.1,328.7 426.0,332.7 427.0,313.9 427.9,308.9 428.9,319.8 429.8,302.0 430.8,299.6 431.7,298.4 432.7,297.2 433.6,296.1 434.5,294.9 435.5,293.7 436.4,293.3 437.4,292.9 438.3,292.5 439.3,292.6 440.2,292.6 441.2,292.7 442.1,293.6 443.1,294.5 444.0,295.6 444.9,296.7 445.9,294.5 446.8,293.6 447.8,292.7 448.7,292.4 449.7,292.2 450.6,291.9 451.6,291.9 452.5,291.8 453.4,291.8 454.4,291.7 455.3,291.7 456.3,291.7 457.2,291.7 458.2,291.7 459.1,291.7 460.1,291.7 461.0,291.7 462.0,291.7 462.9,291.7 463.8,291.7 464.8,291.7 465.7,291.7 466.7,291.7 467.6,291.7 468.6,291.7 469.5,291.7 470.5,291.7 471.4,291.7 472.4,291.7 473.3,291.7 474.2,291.7 475.2,291.7 476.1,291.7 477.1,291.7 478.0,291.7 479.0,291.7 479.9,291.7 480.9,291.7 481.8,291.7 482.7,291.7 483.7,291.7 484.6,291.7 485.6,291.7 486.5,291.7 487.5,291.7 488.4,291.7 489.4,291.7 490.3,291.7 491.3,291.7 492.2,291.7 493.1,291.7 494.1,291.7 495.0,291.7 496.0,291.7 496.9,291.7 497.9,291.7 498.8,291.7 499.8,291.7 500.7,291.7 501.7,291.7 502.6,291.7 503.5,291.7 504.5,291.7 505.4,291.7 506.4,291.7 507.3,291.7 508.3,291.7 509.2,291.7 510.2,291.7 511.1,291.7 512.0,291.7 513.0,291.7 513.9,291.7 514.9,291.7 515.8,291.7 516.8,291.7 517.7,291.7 518.7,291.7 519.6,291.7 520.6,291.7 521.5,291.7 522.4,291.7 523.4,291.7 524.3,291.7 525.3,291.7 526.2,291.7 527.2,291.7 528.1,291.7 529.1,291.7 530.0,291.7 531.0,291.7 531.9,292.1 532.8,293.7 533.8,292.5 534.7,292.8 535.7,293.1 536.6,295.4 537.6,297.6 538.5,295.1 539.5,302.0 540.4,310.9 541.4,313.9 542.3,296.5 543.2,304.0 544.2,299.0 545.1,294.5 546.1,293.6 547.0,292.7 548.0,292.4 548.9,292.0 549.9,291.7 550.8,291.7 551.7,291.7 552.7,291.7 553.6,291.7 554.6,291.7 555.5,291.7 556.5,291.7 557.4,291.7 558.4,291.7 559.3,291.7 560.3,291.7 561.2,291.7 562.1,291.7 563.1,291.7 564.0,291.7 565.0,291.7 565.9,291.7 566.9,291.7 567.8,291.7 568.8,291.7 569.7,291.7 570.7,291.7 571.6,291.7 572.5,291.7 573.5,291.7 574.4,291.7 575.4,291.7 576.3,291.7 577.3,291.7 578.2,291.7 579.2,291.7 580.1,291.7 581.0,291.7 582.0,291.7 582.9,291.7 583.9,291.7 584.8,291.7 585.8,291.7 586.7,291.7 587.7,291.7 588.6,291.7 589.6,291.7 590.5,291.7 591.4,291.7 592.4,291.7 593.3,291.7 594.3,291.7 595.2,291.7 596.2,291.7 597.1,291.7 598.1,291.7 599.0,291.7 600.0,291.7 600.9,291.7 601.8,291.7 602.8,291.7 603.7,291.7 604.7,291.7 605.6,291.7 606.6,291.7 607.5,291.7 608.5,291.7 609.4,291.7 610.4,291.7 611.3,291.7 612.2,291.7 613.2,291.7 614.1,291.7 615.1,291.7 616.0,291.7 617.0,291.7 617.9,291.7 618.9,291.7 619.8,291.7 620.7,291.7 621.7,291.7 622.6,291.7 623.6,291.7 624.5,291.7 625.5,291.7 626.4,291.7 627.4,291.7 628.3,291.7 629.3,291.7 630.2,291.7 631.1,291.7 632.1,291.7 633.0,291.7 634.0,291.7 634.9,291.7 635.9,291.7 636.8,291.7 637.8,291.7 638.7,291.7 639.7,291.7 640.6,291.7 641.5,291.7 642.5,291.7 643.4,291.7 644.4,291.7 645.3,291.7 646.3,291.7 647.2,291.7 648.2,291.7 649.1,291.7 650.0,291.7 651.0,291.7 651.9,291.7 652.9,291.7 653.8,291.7 654.8,291.7 655.7,291.7 656.7,302.6 657.6,299.0 658.6,293.1 659.5,291.7 660.4,291.7 661.4,291.7 662.3,291.7 663.3,291.7 664.2,291.7 665.2,291.7 666.1,291.7 667.1,291.7 668.0,291.7 669.0,291.7 669.9,291.7 670.8,291.7 671.8,291.7 672.7,291.7 673.7,291.7 674.6,291.7 675.6,291.7 676.5,291.7 677.5,291.7 678.4,291.7 679.4,291.7 680.3,291.7 681.2,291.7 682.2,291.7 683.1,291.7 684.1,291.7 685.0,291.7 686.0,291.7 686.9,291.7 687.9,291.7 688.8,291.7 689.7,291.7 690.7,291.7 691.6,291.7 692.6,291.7 693.5,291.7 694.5,272.3 695.4,230.7 696.4,217.9 697.3,218.8 698.3,262.4 699.2,302.0 700.1,313.9 701.1,306.0 702.0,294.1 703.0,282.2 703.9,273.3 704.9,264.4 705.8,259.4 706.8,262.9 707.7,266.4 708.7,271.6 709.6,276.9 710.5,282.5 711.5,287.0 712.4,292.0 713.4,298.6 714.3,297.8 715.3,300.0 716.2,298.3 717.2,294.5 718.1,288.5 719.0,284.7 720.0,288.2 720.9,291.4 721.9,293.0 722.8,296.8 723.8,301.8 724.7,300.0 725.7,290.4 726.6,286.9 727.6,282.5 728.5,279.0 729.4,287.4 730.4,294.5 731.3,300.3 732.3,303.3 733.2,292.8 734.2,292.9 735.1,292.6 736.1,289.9 737.0,290.0 738.0,290.1 738.9,290.1 739.8,294.6 740.8,292.3 741.7,294.7 742.7,302.7 743.6,286.5 744.6,284.4 745.5,290.4 746.5,290.8 747.4,287.3 748.3,290.4 749.3,295.0 750.2,296.8 751.2,288.7 752.1,285.3 753.1,288.7 754.0,293.3 755.0,282.7 755.9,284.1 756.9,284.1 757.8,279.3 758.7,286.9 759.7,293.6 760.6,297.2 761.6,299.3 762.5,289.3 763.5,290.1 764.4,289.6 765.4,286.8 766.3,296.4 767.3,293.7 768.2,301.4 769.1,300.9 770.1,294.9 771.0,280.8 772.0,285.0 772.9,285.8 773.9,285.6 774.8,286.4 775.8,287.5 776.7,296.9 777.7,304.4 778.6,300.3 779.5,283.4 780.5,272.7 781.4,281.9 782.4,285.0 783.3,275.4 784.3,279.4 785.2,297.2 786.2,287.4 787.1,287.6 788.0,290.8 789.0,293.2 789.9,291.0 790.9,286.4 791.8,286.4 792.8,292.8 793.7,290.0 794.7,281.4 795.6,279.1 796.6,286.9 797.5,296.2 798.4,297.7 799.4,295.8 800.3,293.7 801.3,291.0 802.2,281.7 803.2,287.0 804.1,283.9 805.1,273.3 806.0,275.0 807.0,283.4 807.9,282.4 808.8,283.6 809.8,291.5 810.7,296.7 811.7,286.7 812.6,278.8 813.6,285.3 814.5,292.5 815.5,290.9 816.4,290.2 817.3,285.9 818.3,271.5 819.2,270.9 820.2,276.6 821.1,280.8 822.1,280.3 823.0,282.3 824.0,285.0 824.9,289.8 825.9,282.7 826.8,267.1 827.7,274.2 828.7,284.8 829.6,291.2 830.6,288.3 831.5,294.7 832.5,283.6 833.4,291.7 834.4,287.1 835.3,283.3 836.3,275.8 837.2,275.4 838.1,274.4 839.1,272.8 840.0,283.7 841.0,282.6 841.9,278.7 842.9,284.4 843.8,291.5 844.8,289.1 845.7,284.7 846.7,287.1 847.6,285.0 848.5,273.6 849.5,284.4 850.4,290.6 851.4,280.8 852.3,282.6 853.3,281.4 854.2,279.7 855.2,268.7 856.1,282.2 857.0,279.2 858.0,283.8 858.9,283.0 859.9,290.5 860.8,285.1 861.8,287.8 862.7,291.0 863.7,293.8 864.6,290.1 865.6,294.7 866.5,292.5 867.4,284.6 868.4,289.9 869.3,283.9 870.3,294.3 871.2,297.3 872.2,287.2 873.1,284.7 874.1,289.6 875.0,289.7 876.0,292.3 876.9,292.9 877.8,293.3 878.8,295.4 879.7,289.2 880.7,278.5 881.6,267.2 882.6,281.6 883.5,290.2 884.5,281.8 885.4,273.5 886.3,278.0 887.3,286.7 888.2,279.3 889.2,274.7 890.1,289.1 891.1,282.2 892.0,275.1 893.0,285.4 893.9,286.1 894.9,295.3 895.8,290.4 896.7,287.0 897.7,286.1 898.6,282.5 899.6,283.7 900.5,291.1 901.5,285.8 902.4,274.8 903.4,278.5 904.3,288.3 905.3,287.4 906.2,284.5 907.1,281.4 908.1,276.1 909.0,272.8 910.0,282.3 910.9,293.6 911.9,290.2 912.8,282.4 913.8,277.5 914.7,274.5 915.7,279.6 916.6,279.1 917.5,276.1 918.5,304.4 919.4,287.8 920.4,274.2 921.3,282.3 922.3,277.8 923.2,271.0 924.2,281.9 925.1,289.1 926.0,278.8 927.0,288.1 927.9,297.4 928.9,284.6 929.8,270.3 930.8,268.9 931.7,273.9 932.7,280.8 933.6,282.2 934.6,283.4 935.5,284.6 936.4,260.1 937.4,277.2 938.3,279.3 939.3,300.1 940.2,280.8 941.2,274.2 942.1,275.2 943.1,271.8 944.0,270.8 945.0,264.2 945.9,271.9 946.8,283.8 947.8,285.8 948.7,276.1 949.7,277.4 950.6,282.2 951.6,275.8 952.5,275.3 953.5,279.6 954.4,277.6 955.3,267.8 956.3,273.7 957.2,267.9 958.2,260.6 959.1,261.4 960.1,272.1 961.0,276.6 962.0,274.0 962.9,283.8 963.9,288.9 964.8,275.8 965.7,271.5 966.7,271.4 967.6,281.2 968.6,273.9 969.5,280.1 970.5,285.8 971.4,281.2 972.4,277.7 973.3,272.8 974.3,270.8 975.2,273.4 976.1,276.7 977.1,261.3 978.0,276.4 979.0,285.0 979.9,275.5 980.9,265.3 981.8,270.1 982.8,272.1 983.7,281.8 984.6,272.6 985.6,260.0 986.5,271.6 987.5,278.2 988.4,274.0 989.4,273.8 990.3,267.7 991.3,267.8 992.2,262.6 993.2,271.9 994.1,273.0 995.0,271.0 996.0,267.9 996.9,278.4 997.9,282.3 998.8,282.4 999.8,278.9 1000.7,282.0 1001.7,294.9 1002.6,285.6 1003.6,276.2 1004.5,273.4 1005.4,274.1 1006.4,270.0 1007.3,274.3 1008.3,274.5 1009.2,269.0 1010.2,267.3 1011.1,262.3 1012.1,265.1 1013.0,277.2 1014.0,277.3 1014.9,263.8 1015.8,244.4 1016.8,256.8 1017.7,257.5 1018.7,267.3 1019.6,267.0 1020.6,268.4 1021.5,276.8 1022.5,271.7 1023.4,265.6 1024.3,266.7 1025.3,266.9 1026.2,268.2 1027.2,280.9 1028.1,281.6 1029.1,275.7 1030.0,269.9 1031.0,262.0 1031.9,254.2 1032.9,276.2 1033.8,271.8 1034.7,251.2 1035.7,265.6 1036.6,276.7 1037.6,271.4 1038.5,267.4 1039.5,264.8 1040.4,276.2 1041.4,273.6 1042.3,263.9 1043.3,270.4 1044.2,277.7 1045.1,261.5 1046.1,260.8 1047.0,269.6 1048.0,268.8 1048.9,270.4 1049.9,275.0 1050.8,276.4 1051.8,275.9 1052.7,271.3 1053.6,273.5 1054.6,281.1 1055.5,274.7 1056.5,264.3 1057.4,258.7 1058.4,279.9 1059.3,278.3 1060.3,272.3 1061.2,272.4 1062.2,269.7 1063.1,257.9 1064.0,255.4 1065.0,256.2 1065.9,253.2 1066.9,243.8 1067.8,239.6 1068.8,273.7 1069.7,286.3 1070.7,276.2 1071.6,270.5 1072.6,276.2 1073.5,270.7 1074.4,276.4 1075.4,269.9 1076.3,263.4 1077.3,254.6 1078.2,259.1 1079.2,263.5 1080.1,267.9 1081.1,276.4 1082.0,261.4 1083.0,269.3 1083.9,275.3" fill="none" stroke="#4daf4a" stroke-width="2.2" stroke-linejoin="round"/>
</svg>
<svg class="abs" style="left:1116px;top:102px" width="789" height="409" viewBox="1116 102 789 409">
<rect x="1142.7" y="160" width="8.2" height="16" fill="#377eb8"/>
<rect x="1347.3000000000002" y="160" width="8.2" height="16" fill="#e41a1c"/>
<rect x="1636.0" y="160" width="8.2" height="16" fill="#4daf4a"/>
<path d="M1191.5 203 V480.3" stroke="#e1e3e8" stroke-width="1"/>
<path d="M1268.5 203 V480.3" stroke="#e1e3e8" stroke-width="1"/>
<path d="M1355.5 203 V480.3" stroke="#e1e3e8" stroke-width="1"/>
<path d="M1440.5 203 V480.3" stroke="#e1e3e8" stroke-width="1"/>
<path d="M1527.5 203 V480.3" stroke="#e1e3e8" stroke-width="1"/>
<path d="M1614.5 203 V480.3" stroke="#e1e3e8" stroke-width="1"/>
<path d="M1701.5 203 V480.3" stroke="#e1e3e8" stroke-width="1"/>
<path d="M1787.5 203 V480.3" stroke="#e1e3e8" stroke-width="1"/>
<path d="M1873.5 203 V480.3" stroke="#e1e3e8" stroke-width="1"/>
<path d="M1883.5 203 V480.3" stroke="#e1e3e8" stroke-width="1"/>
<path d="M1191.7 480.3 H1883.2" stroke="#444" stroke-width="1"/>
<path d="M1268.43 480.3 V484.90000000000003" stroke="#444" stroke-width="1"/>
<path d="M1355.58 480.3 V484.90000000000003" stroke="#444" stroke-width="1"/>
<path d="M1440.84 480.3 V484.90000000000003" stroke="#444" stroke-width="1"/>
<path d="M1527.04 480.3 V484.90000000000003" stroke="#444" stroke-width="1"/>
<path d="M1614.20 480.3 V484.90000000000003" stroke="#444" stroke-width="1"/>
<path d="M1701.35 480.3 V484.90000000000003" stroke="#444" stroke-width="1"/>
<path d="M1787.55 480.3 V484.90000000000003" stroke="#444" stroke-width="1"/>
<path d="M1873.76 480.3 V484.90000000000003" stroke="#444" stroke-width="1"/>
<polyline points="1191.7,480.3 1193.6,480.3 1195.5,480.3 1197.4,480.3 1199.3,480.3 1201.2,480.3 1203.1,480.3 1205.0,480.3 1206.9,479.8 1208.8,479.1 1210.6,478.4 1212.5,477.6 1214.4,476.9 1216.3,476.2 1218.2,475.5 1220.1,474.8 1222.0,474.1 1223.9,473.4 1225.8,472.7 1227.7,472.0 1229.6,471.3 1231.5,470.6 1233.4,469.9 1235.3,469.2 1237.2,468.4 1239.1,467.7 1241.0,467.0 1242.9,466.3 1244.7,465.6 1246.6,464.9 1248.5,464.2 1250.4,463.5 1252.3,462.8 1254.2,462.1 1256.1,461.4 1258.0,460.7 1259.9,460.0 1261.8,459.2 1263.7,458.5 1265.6,457.8 1267.5,457.1 1269.4,456.4 1271.3,455.7 1273.2,455.0 1275.1,454.3 1277.0,453.6 1278.9,452.9 1280.7,452.2 1282.6,451.5 1284.5,450.8 1286.4,450.0 1288.3,449.3 1290.2,448.6 1292.1,447.9 1294.0,447.2 1295.9,446.5 1297.8,445.8 1299.7,445.1 1301.6,444.4 1303.5,443.7 1305.4,443.0 1307.3,442.3 1309.2,441.6 1311.1,440.8 1313.0,440.1 1314.8,439.4 1316.7,438.7 1318.6,438.0 1320.5,437.3 1322.4,436.6 1324.3,435.9 1326.2,435.2 1328.1,434.5 1330.0,433.8 1331.9,433.1 1333.8,432.4 1335.7,431.6 1337.6,430.9 1339.5,430.2 1341.4,429.5 1343.3,428.8 1345.2,428.1 1347.1,427.4 1349.0,426.7 1350.8,426.0 1352.7,425.3 1354.6,424.6 1356.5,423.9 1358.4,423.2 1360.3,422.4 1362.2,421.7 1364.1,421.0 1366.0,420.3 1367.9,419.6 1369.8,418.9 1371.7,418.2 1373.6,417.5 1375.5,416.8 1377.4,416.1 1379.3,415.4 1381.2,414.7 1383.1,414.0 1384.9,413.2 1386.8,412.5 1388.7,411.8 1390.6,411.1 1392.5,410.4 1394.4,409.7 1396.3,409.0 1398.2,408.3 1400.1,407.6 1402.0,406.9 1403.9,406.2 1405.8,405.5 1407.7,404.8 1409.6,404.0 1411.5,403.3 1413.4,402.6 1415.3,401.9 1417.2,401.2 1419.1,400.5 1420.9,399.8 1422.8,399.1 1424.7,398.4 1426.6,397.7 1428.5,397.0 1430.4,396.3 1432.3,395.6 1434.2,394.8 1436.1,394.1 1438.0,393.4 1439.9,392.7 1441.8,392.0 1443.7,391.3 1445.6,390.6 1447.5,389.9 1449.4,389.2 1451.3,388.5 1453.2,387.8 1455.0,387.1 1456.9,386.4 1458.8,385.6 1460.7,384.9 1462.6,384.2 1464.5,383.5 1466.4,382.8 1468.3,382.1 1470.2,381.4 1472.1,380.7 1474.0,380.0 1475.9,379.3 1477.8,378.6 1479.7,377.9 1481.6,377.2 1483.5,376.4 1485.4,375.7 1487.3,375.0 1489.2,374.3 1491.0,373.6 1492.9,372.9 1494.8,372.2 1496.7,371.5 1498.6,370.8 1500.5,370.1 1502.4,369.4 1504.3,368.7 1506.2,368.0 1508.1,367.2 1510.0,366.5 1511.9,365.8 1513.8,365.1 1515.7,364.4 1517.6,363.7 1519.5,363.0 1521.4,362.3 1523.3,361.6 1525.1,360.9 1527.0,360.2 1528.9,359.5 1530.8,358.8 1532.7,358.0 1534.6,357.3 1536.5,356.6 1538.4,355.9 1540.3,355.2 1542.2,354.5 1544.1,353.8 1546.0,353.1 1547.9,352.4 1549.8,351.7 1551.7,351.0 1553.6,350.3 1555.5,349.6 1557.4,348.8 1559.3,348.1 1561.1,347.4 1563.0,346.7 1564.9,346.0 1566.8,345.3 1568.7,344.6 1570.6,343.9 1572.5,343.2 1574.4,342.5 1576.3,341.8 1578.2,341.1 1580.1,340.4 1582.0,339.6 1583.9,338.9 1585.8,338.2 1587.7,337.5 1589.6,336.8 1591.5,336.1 1593.4,335.4 1595.2,334.7 1597.1,334.0 1599.0,333.3 1600.9,332.6 1602.8,331.9 1604.7,331.2 1606.6,330.4 1608.5,329.7 1610.4,329.0 1612.3,328.3 1614.2,327.6 1616.1,326.9 1618.0,326.2 1619.9,325.5 1621.8,324.8 1623.7,324.1 1625.6,323.4 1627.5,322.7 1629.4,322.0 1631.2,321.2 1633.1,320.5 1635.0,319.8 1636.9,319.1 1638.8,318.4 1640.7,317.7 1642.6,317.0 1644.5,316.3 1646.4,315.6 1648.3,314.9 1650.2,314.2 1652.1,313.5 1654.0,312.8 1655.9,312.0 1657.8,311.3 1659.7,310.6 1661.6,309.9 1663.5,309.2 1665.4,308.5 1667.2,307.8 1669.1,307.1 1671.0,306.4 1672.9,305.7 1674.8,305.0 1676.7,304.3 1678.6,303.6 1680.5,302.8 1682.4,302.1 1684.3,301.4 1686.2,300.7 1688.1,300.0 1690.0,299.3 1691.9,298.6 1693.8,297.9 1695.7,297.2 1697.6,296.5 1699.5,295.8 1701.3,295.1 1703.2,294.4 1705.1,293.6 1707.0,292.9 1708.9,292.2 1710.8,291.5 1712.7,290.8 1714.6,290.1 1716.5,289.4 1718.4,288.7 1720.3,288.0 1722.2,287.3 1724.1,286.6 1726.0,285.9 1727.9,285.2 1729.8,284.4 1731.7,283.7 1733.6,283.0 1735.5,282.3 1737.3,281.6 1739.2,280.9 1741.1,280.2 1743.0,279.5 1744.9,278.8 1746.8,278.1 1748.7,277.4 1750.6,276.7 1752.5,276.0 1754.4,275.2 1756.3,274.5 1758.2,273.8 1760.1,273.1 1762.0,272.4 1763.9,271.7 1765.8,271.0 1767.7,270.3 1769.6,269.6 1771.4,268.9 1773.3,268.2 1775.2,267.5 1777.1,266.8 1779.0,266.0 1780.9,265.3 1782.8,264.6 1784.7,263.9 1786.6,263.2 1788.5,262.5 1790.4,261.8 1792.3,261.1 1794.2,260.4 1796.1,259.7 1798.0,259.0 1799.9,258.3 1801.8,257.6 1803.7,256.8 1805.6,256.1 1807.4,255.4 1809.3,254.7 1811.2,254.0 1813.1,253.3 1815.0,252.6 1816.9,251.9 1818.8,251.2 1820.7,250.5 1822.6,249.8 1824.5,249.1 1826.4,248.4 1828.3,247.6 1830.2,246.9 1832.1,246.2 1834.0,245.5 1835.9,244.8 1837.8,244.1 1839.7,243.4 1841.5,242.7 1843.4,242.0 1845.3,241.3 1847.2,240.6 1849.1,239.9 1851.0,239.2 1852.9,238.4 1854.8,237.7 1856.7,237.0 1858.6,236.3 1860.5,235.6 1862.4,234.9 1864.3,234.2 1866.2,233.5 1868.1,232.8 1870.0,232.1 1871.9,231.4 1873.8,230.7 1875.7,230.0 1877.5,229.2 1879.4,228.5 1881.3,227.8 1883.2,227.1" fill="none" stroke="#377eb8" stroke-width="2.3"/>
<polyline points="1191.7,480.3 1193.6,480.3 1195.5,480.3 1197.4,480.3 1199.3,480.3 1201.2,480.3 1203.1,480.3 1205.0,480.3 1206.9,479.8 1208.8,479.1 1210.6,478.4 1212.5,477.6 1214.4,476.9 1216.3,476.2 1218.2,475.5 1220.1,474.8 1222.0,474.1 1223.9,473.4 1225.8,472.7 1227.7,472.0 1229.6,471.3 1231.5,470.6 1233.4,469.9 1235.3,469.2 1237.2,468.4 1239.1,467.7 1241.0,467.0 1242.9,466.3 1244.7,465.6 1246.6,464.9 1248.5,464.2 1250.4,463.5 1252.3,462.8 1254.2,462.1 1256.1,461.4 1258.0,460.7 1259.9,460.0 1261.8,459.2 1263.7,458.5 1265.6,457.8 1267.5,457.1 1269.4,456.4 1271.3,455.7 1273.2,455.0 1275.1,454.3 1277.0,453.6 1278.9,452.9 1280.7,452.2 1282.6,451.5 1284.5,450.8 1286.4,450.0 1288.3,449.3 1290.2,448.6 1292.1,447.9 1294.0,447.2 1295.9,446.5 1297.8,445.8 1299.7,445.1 1301.6,444.4 1303.5,443.7 1305.4,443.0 1307.3,442.3 1309.2,441.6 1311.1,440.8 1313.0,440.1 1314.8,439.4 1316.7,438.7 1318.6,438.0 1320.5,437.3 1322.4,436.6 1324.3,435.9 1326.2,435.2 1328.1,434.5 1330.0,433.8 1331.9,433.1 1333.8,432.4 1335.7,431.6 1337.6,430.9 1339.5,430.2 1341.4,429.5 1343.3,428.8 1345.2,428.1 1347.1,427.4 1349.0,426.7 1350.8,426.0 1352.7,425.3 1354.6,424.6 1356.5,423.9 1358.4,423.2 1360.3,422.4 1362.2,421.7 1364.1,421.0 1366.0,420.3 1367.9,419.6 1369.8,418.9 1371.7,418.2 1373.6,417.5 1375.5,416.8 1377.4,416.1 1379.3,415.4 1381.2,414.7 1383.1,414.0 1384.9,413.2 1386.8,412.5 1388.7,411.8 1390.6,411.1 1392.5,410.4 1394.4,409.7 1396.3,409.0 1398.2,408.3 1400.1,407.6 1402.0,406.9 1403.9,406.2 1405.8,405.5 1407.7,404.8 1409.6,404.0 1411.5,403.3 1413.4,402.6 1415.3,401.9 1417.2,401.2 1419.1,400.5 1420.9,399.8 1422.8,399.1 1424.7,398.4 1426.6,397.7 1428.5,397.0 1430.4,396.3 1432.3,395.6 1434.2,394.8 1436.1,394.1 1438.0,393.4 1439.9,392.7 1441.8,392.0 1443.7,391.3 1445.6,390.6 1447.5,389.9 1449.4,389.2 1451.3,388.5 1453.2,387.8 1455.0,387.1 1456.9,386.4 1458.8,385.6 1460.7,384.9 1462.6,384.2 1464.5,383.5 1466.4,382.8 1468.3,382.1 1470.2,381.4 1472.1,380.7 1474.0,380.0 1475.9,379.3 1477.8,378.6 1479.7,377.9 1481.6,377.2 1483.5,376.4 1485.4,375.7 1487.3,375.0 1489.2,374.3 1491.0,373.6 1492.9,372.9 1494.8,372.2 1496.7,371.5 1498.6,370.8 1500.5,370.1 1502.4,369.4 1504.3,368.7 1506.2,368.0 1508.1,367.2 1510.0,366.5 1511.9,365.8 1513.8,365.1 1515.7,364.4 1517.6,363.7 1519.5,363.0 1521.4,362.3 1523.3,361.6 1525.1,360.9 1527.0,360.2 1528.9,359.5 1530.8,358.8 1532.7,358.0 1534.6,357.3 1536.5,356.6 1538.4,355.9 1540.3,355.2 1542.2,354.5 1544.1,353.8 1546.0,353.1 1547.9,352.4 1549.8,351.7 1551.7,351.0 1553.6,350.3 1555.5,349.6 1557.4,348.8 1559.3,348.1 1561.1,347.4 1563.0,346.7 1564.9,346.0 1566.8,345.3 1568.7,344.6 1570.6,343.9 1572.5,343.2 1574.4,342.5 1576.3,341.8 1578.2,341.1 1580.1,340.4 1582.0,339.6 1583.9,338.9 1585.8,338.2 1587.7,337.5 1589.6,336.8 1591.5,336.1 1593.4,335.4 1595.2,334.7 1597.1,334.0 1599.0,333.3 1600.9,332.6 1602.8,331.9 1604.7,331.2 1606.6,330.4 1608.5,329.7 1610.4,329.0 1612.3,328.3 1614.2,327.6 1616.1,326.9 1618.0,326.2 1619.9,325.5 1621.8,324.8 1623.7,324.1 1625.6,323.4 1627.5,322.7 1629.4,322.0 1631.2,321.2 1633.1,320.5 1635.0,319.8 1636.9,319.1 1638.8,318.4 1640.7,317.7 1642.6,317.0 1644.5,316.3 1646.4,315.6 1648.3,314.9 1650.2,314.2 1652.1,313.5 1654.0,312.8 1655.9,312.0 1657.8,311.3 1659.7,310.6 1661.6,309.9 1663.5,309.2 1665.4,308.5 1667.2,307.8 1669.1,307.1 1671.0,306.4 1672.9,305.7 1674.8,305.0 1676.7,304.3 1678.6,303.6 1680.5,302.8 1682.4,302.1 1684.3,301.4 1686.2,300.7 1688.1,300.0 1690.0,299.3 1691.9,298.6 1693.8,297.9 1695.7,297.2 1697.6,296.5 1699.5,295.8 1701.3,295.1 1703.2,294.4 1705.1,293.6 1707.0,292.9 1708.9,292.2 1710.8,291.5 1712.7,290.8 1714.6,290.1 1716.5,289.4 1718.4,288.7 1720.3,288.0 1722.2,287.3 1724.1,286.6 1726.0,285.9 1727.9,285.2 1729.8,284.4 1731.7,283.7 1733.6,283.0 1735.5,282.3 1737.3,281.6 1739.2,280.9 1741.1,280.2 1743.0,279.5 1744.9,278.8 1746.8,278.1 1748.7,277.4 1750.6,276.7 1752.5,276.0 1754.4,275.2 1756.3,274.5 1758.2,273.8 1760.1,273.1 1762.0,272.4 1763.9,271.7 1765.8,271.0 1767.7,270.3 1769.6,269.6 1771.4,268.9 1773.3,268.2 1775.2,267.5 1777.1,266.8 1779.0,266.0 1780.9,265.3 1782.8,264.6 1784.7,263.9 1786.6,263.2 1788.5,262.5 1790.4,261.8 1792.3,261.1 1794.2,260.4 1796.1,259.7 1798.0,259.0 1799.9,258.3 1801.8,257.6 1803.7,256.8 1805.6,256.1 1807.4,255.4 1809.3,254.7 1811.2,254.0 1813.1,253.3 1815.0,252.6 1816.9,251.9 1818.8,251.2 1820.7,250.5 1822.6,249.8 1824.5,249.1 1826.4,248.4 1828.3,247.6 1830.2,246.9 1832.1,246.2 1834.0,245.5 1835.9,244.8 1837.8,244.1 1839.7,243.4 1841.5,242.7 1843.4,242.0 1845.3,241.3 1847.2,240.6 1849.1,239.9 1851.0,239.2 1852.9,238.4 1854.8,237.7 1856.7,237.0 1858.6,236.3 1860.5,235.6 1862.4,234.9 1864.3,234.2 1866.2,233.5 1868.1,232.8 1870.0,232.1 1871.9,231.4 1873.8,230.7 1875.7,230.0 1877.5,229.2 1879.4,228.5 1881.3,227.8 1883.2,227.1" fill="none" stroke="#e41a1c" stroke-width="2.3"/>
<polyline points="1191.7,480.3 1193.6,480.3 1195.5,480.3 1197.4,480.3 1199.3,480.3 1201.2,480.3 1203.1,480.3 1205.0,480.3 1206.9,479.8 1208.8,479.1 1210.6,478.4 1212.5,477.6 1214.4,476.9 1216.3,476.2 1218.2,475.5 1220.1,474.8 1222.0,474.1 1223.9,473.4 1225.8,472.7 1227.7,472.0 1229.6,471.3 1231.5,470.6 1233.4,469.9 1235.3,469.2 1237.2,468.4 1239.1,467.7 1241.0,467.0 1242.9,466.3 1244.7,465.6 1246.6,464.9 1248.5,464.2 1250.4,463.5 1252.3,462.8 1254.2,462.1 1256.1,461.4 1258.0,460.7 1259.9,460.0 1261.8,459.2 1263.7,458.5 1265.6,457.8 1267.5,457.1 1269.4,456.4 1271.3,455.7 1273.2,455.0 1275.1,454.3 1277.0,453.6 1278.9,452.9 1280.7,452.2 1282.6,451.5 1284.5,450.8 1286.4,450.0 1288.3,449.3 1290.2,448.6 1292.1,447.9 1294.0,447.2 1295.9,446.5 1297.8,445.8 1299.7,445.1 1301.6,444.4 1303.5,443.7 1305.4,443.0 1307.3,442.3 1309.2,441.6 1311.1,440.8 1313.0,440.1 1314.8,439.4 1316.7,438.7 1318.6,438.0 1320.5,437.3 1322.4,436.6 1324.3,435.9 1326.2,435.2 1328.1,434.5 1330.0,433.8 1331.9,433.1 1333.8,432.4 1335.7,431.6 1337.6,430.9 1339.5,430.2 1341.4,429.5 1343.3,428.8 1345.2,428.1 1347.1,427.4 1349.0,426.7 1350.8,426.0 1352.7,425.3 1354.6,424.6 1356.5,423.9 1358.4,423.2 1360.3,422.4 1362.2,421.7 1364.1,421.0 1366.0,420.3 1367.9,419.6 1369.8,418.9 1371.7,418.2 1373.6,417.5 1375.5,416.8 1377.4,416.1 1379.3,415.4 1381.2,414.7 1383.1,414.0 1384.9,413.2 1386.8,412.5 1388.7,411.8 1390.6,411.1 1392.5,410.4 1394.4,409.7 1396.3,409.0 1398.2,408.3 1400.1,407.6 1402.0,406.9 1403.9,406.2 1405.8,405.5 1407.7,404.8 1409.6,404.0 1411.5,403.3 1413.4,402.6 1415.3,401.9 1417.2,401.2 1419.1,400.5 1420.9,399.8 1422.8,399.1 1424.7,398.4 1426.6,397.7 1428.5,397.0 1430.4,396.3 1432.3,395.6 1434.2,394.8 1436.1,394.1 1438.0,393.4 1439.9,392.7 1441.8,392.0 1443.7,391.3 1445.6,390.6 1447.5,389.9 1449.4,389.2 1451.3,388.5 1453.2,387.8 1455.0,387.1 1456.9,386.4 1458.8,385.6 1460.7,384.9 1462.6,384.2 1464.5,383.5 1466.4,382.8 1468.3,382.1 1470.2,381.4 1472.1,380.7 1474.0,380.0 1475.9,379.3 1477.8,378.6 1479.7,377.9 1481.6,377.2 1483.5,376.4 1485.4,375.7 1487.3,375.0 1489.2,374.3 1491.0,373.6 1492.9,372.9 1494.8,372.2 1496.7,371.5 1498.6,370.8 1500.5,370.1 1502.4,369.4 1504.3,368.7 1506.2,367.9 1508.1,367.2 1510.0,366.5 1511.9,365.8 1513.8,365.1 1515.7,364.4 1517.6,363.7 1519.5,362.9 1521.4,362.2 1523.3,361.5 1525.1,360.8 1527.0,360.1 1528.9,359.4 1530.8,358.6 1532.7,357.9 1534.6,357.2 1536.5,356.5 1538.4,355.8 1540.3,355.0 1542.2,354.3 1544.1,353.6 1546.0,352.9 1547.9,352.2 1549.8,351.4 1551.7,350.7 1553.6,350.0 1555.5,349.3 1557.4,348.5 1559.3,347.8 1561.1,347.1 1563.0,346.4 1564.9,345.6 1566.8,344.9 1568.7,344.2 1570.6,343.4 1572.5,342.7 1574.4,342.0 1576.3,341.3 1578.2,340.5 1580.1,339.8 1582.0,339.1 1583.9,338.3 1585.8,337.6 1587.7,336.9 1589.6,336.1 1591.5,335.4 1593.4,334.7 1595.2,333.9 1597.1,333.2 1599.0,332.4 1600.9,331.7 1602.8,331.0 1604.7,330.2 1606.6,329.5 1608.5,328.8 1610.4,328.0 1612.3,327.3 1614.2,326.5 1616.1,325.8 1618.0,325.1 1619.9,324.3 1621.8,323.6 1623.7,322.8 1625.6,322.1 1627.5,321.3 1629.4,320.6 1631.2,319.8 1633.1,319.1 1635.0,318.3 1636.9,317.6 1638.8,316.9 1640.7,316.1 1642.6,315.4 1644.5,314.6 1646.4,313.9 1648.3,313.1 1650.2,312.4 1652.1,311.6 1654.0,310.9 1655.9,310.1 1657.8,309.3 1659.7,308.6 1661.6,307.8 1663.5,307.1 1665.4,306.3 1667.2,305.6 1669.1,304.8 1671.0,304.1 1672.9,303.3 1674.8,302.5 1676.7,301.8 1678.6,301.0 1680.5,300.3 1682.4,299.5 1684.3,298.8 1686.2,298.0 1688.1,297.2 1690.0,296.5 1691.9,295.7 1693.8,294.9 1695.7,294.2 1697.6,293.4 1699.5,292.7 1701.3,291.9 1703.2,291.1 1705.1,290.4 1707.0,289.6 1708.9,288.8 1710.8,288.1 1712.7,287.3 1714.6,286.5 1716.5,285.7 1718.4,285.0 1720.3,284.2 1722.2,283.4 1724.1,282.7 1726.0,281.9 1727.9,281.1 1729.8,280.4 1731.7,279.6 1733.6,278.8 1735.5,278.0 1737.3,277.3 1739.2,276.5 1741.1,275.7 1743.0,274.9 1744.9,274.2 1746.8,273.4 1748.7,272.6 1750.6,271.8 1752.5,271.0 1754.4,270.3 1756.3,269.5 1758.2,268.7 1760.1,267.9 1762.0,267.1 1763.9,266.4 1765.8,265.6 1767.7,264.8 1769.6,264.0 1771.4,263.2 1773.3,262.4 1775.2,261.7 1777.1,260.9 1779.0,260.1 1780.9,259.3 1782.8,258.5 1784.7,257.7 1786.6,256.9 1788.5,256.1 1790.4,255.4 1792.3,254.6 1794.2,253.8 1796.1,253.0 1798.0,252.2 1799.9,251.4 1801.8,250.6 1803.7,249.8 1805.6,249.0 1807.4,248.2 1809.3,247.4 1811.2,246.6 1813.1,245.8 1815.0,245.0 1816.9,244.2 1818.8,243.4 1820.7,242.7 1822.6,241.9 1824.5,241.1 1826.4,240.3 1828.3,239.5 1830.2,238.7 1832.1,237.9 1834.0,237.1 1835.9,236.3 1837.8,235.4 1839.7,234.6 1841.5,233.8 1843.4,233.0 1845.3,232.2 1847.2,231.4 1849.1,230.6 1851.0,229.8 1852.9,229.0 1854.8,228.2 1856.7,227.4 1858.6,226.6 1860.5,225.8 1862.4,225.0 1864.3,224.2 1866.2,223.4 1868.1,222.5 1870.0,221.7 1871.9,220.9 1873.8,220.1 1875.7,219.3 1877.5,218.5 1879.4,217.7 1881.3,216.9 1883.2,216.0" fill="none" stroke="#4daf4a" stroke-width="2.3"/>
<path d="M1841.8 160.8 V175.2 L1832.8 168 Z" fill="#aaa"/>
<path d="M1879.3 160.8 V175.2 L1887.7 168 Z" fill="#2a3f5f"/>
</svg>
<svg class="abs" style="left:317px;top:523px" width="789" height="381" viewBox="317 523 789 381">
<rect x="393.0" y="874.8" width="40.4" height="10.3" fill="#5555ff"/>
<rect x="451.4" y="836.8" width="40.4" height="38.1" fill="#5555ff"/>
<rect x="509.7" y="683.9" width="40.4" height="152.8" fill="#5555ff"/>
<rect x="568.1" y="683.9" width="40.4" height="201.2" fill="#0000ff"/>
<rect x="626.5" y="874.8" width="40.4" height="10.3" fill="#ff5555"/>
<rect x="684.8" y="836.8" width="40.4" height="38.1" fill="#ff5555"/>
<rect x="743.2" y="683.8" width="40.4" height="153.0" fill="#ff5555"/>
<rect x="801.5" y="683.8" width="40.4" height="201.3" fill="#ff0000"/>
<rect x="859.9" y="873.3" width="40.4" height="11.8" fill="#55aa55"/>
<rect x="918.3" y="827.9" width="40.4" height="45.3" fill="#55aa55"/>
<rect x="976.7" y="652.0" width="40.4" height="175.9" fill="#55aa55"/>
<rect x="1035.0" y="652.0" width="40.4" height="233.1" fill="#008000"/>
<path d="M384 885.1 H1084.6" stroke="#444" stroke-width="1"/>
<path d="M384.0 885.1 V889.7" stroke="#444" stroke-width="1"/>
<path d="M442.4 885.1 V889.7" stroke="#444" stroke-width="1"/>
<path d="M500.7 885.1 V889.7" stroke="#444" stroke-width="1"/>
<path d="M559.1 885.1 V889.7" stroke="#444" stroke-width="1"/>
<path d="M617.5 885.1 V889.7" stroke="#444" stroke-width="1"/>
<path d="M675.8 885.1 V889.7" stroke="#444" stroke-width="1"/>
<path d="M734.2 885.1 V889.7" stroke="#444" stroke-width="1"/>
<path d="M792.6 885.1 V889.7" stroke="#444" stroke-width="1"/>
<path d="M850.9 885.1 V889.7" stroke="#444" stroke-width="1"/>
<path d="M909.3 885.1 V889.7" stroke="#444" stroke-width="1"/>
<path d="M967.7 885.1 V889.7" stroke="#444" stroke-width="1"/>
<path d="M1026.0 885.1 V889.7" stroke="#444" stroke-width="1"/>
<path d="M1084.4 885.1 V889.7" stroke="#444" stroke-width="1"/>
</svg>
<div id="txt">
<span class="t" style="left:103.10px;top:9.97px;font-size:13.5px;line-height:13.5px;color:#fff;transform:scaleX(0.9454);transform-origin:0 0;-webkit-text-stroke:0.3px #fff;">PROJECT</span>
<span class="t" style="left:181.76px;top:9.97px;font-size:13.5px;line-height:13.5px;color:#fff;transform:scaleX(0.9752);transform-origin:0 0;-webkit-text-stroke:0.3px #fff;">EDIT</span>
<span class="t" style="left:231.36px;top:9.97px;font-size:13.5px;line-height:13.5px;color:#fff;transform:scaleX(0.9747);transform-origin:0 0;-webkit-text-stroke:0.3px #fff;">HELP</span>
<span class="t" style="left:291.42px;top:8.22px;font-size:13.8px;line-height:13.8px;color:#fff;font-weight:bold;">*</span>
<span class="t" style="left:305.42px;top:8.89px;font-size:13.6px;line-height:13.6px;color:#fff;font-weight:bold;transform:scaleX(1.0172);transform-origin:0 0;">Process Mining to Simula...</span>
<span class="t" style="left:1548.37px;top:8.36px;font-size:12.8px;line-height:12.8px;color:#111;transform:scaleX(1.0219);transform-origin:0 0;">Latest Version</span>
<span class="t" style="left:1636.50px;top:8.36px;font-size:12.8px;line-height:12.8px;color:#111;transform:scaleX(1.0568);transform-origin:0 0;">[05 Jun 20...</span>
<span class="t" style="left:1765.17px;top:9.34px;font-size:14.6px;line-height:14.6px;color:#fff;font-weight:bold;transform:scaleX(0.9412);transform-origin:0 0;">Save Changes</span>
<span class="t" style="left:1887.88px;top:8.45px;font-size:14px;line-height:14px;color:#fff;-webkit-text-stroke:0.5px #fff;">?</span>
<span class="t" style="left:54.24px;top:50.95px;font-size:14px;line-height:14px;color:#fff;transform:scaleX(0.9635);transform-origin:0 0;">DASHBOARD</span>
<span class="t" style="left:67.32px;top:78.65px;font-size:12.7px;line-height:12.7px;color:#fff;transform:scaleX(0.9592);transform-origin:0 0;-webkit-text-stroke:0.3px #fff;">INPUTS</span>
<span class="t" style="left:68.39px;top:102.75px;font-size:12.7px;line-height:12.7px;color:#fff;transform:scaleX(0.9344);transform-origin:0 0;-webkit-text-stroke:0.3px #fff;">VARIANT PANELS</span>
<span class="t" style="left:67.92px;top:126.85px;font-size:12.7px;line-height:12.7px;color:#fff;transform:scaleX(0.9204);transform-origin:0 0;-webkit-text-stroke:0.3px #fff;">SCENARIOS</span>
<span class="t" style="left:74.18px;top:149.14px;font-size:14.6px;line-height:14.6px;color:#fff;transform:scaleX(0.9674);transform-origin:0 0;-webkit-text-stroke:0.3px #fff;">Base Case</span>
<span class="t" style="left:74.86px;top:171.14px;font-size:14.6px;line-height:14.6px;color:#fff;transform:scaleX(0.9962);transform-origin:0 0;-webkit-text-stroke:0.3px #fff;">10% Headcount Reduction</span>
<span class="t" style="left:74.86px;top:193.14px;font-size:14.6px;line-height:14.6px;color:#fff;transform:scaleX(0.9916);transform-origin:0 0;-webkit-text-stroke:0.3px #fff;">10% Annual Order Growth</span>
<span class="t" style="left:74.76px;top:215.14px;font-size:14.6px;line-height:14.6px;color:#fff;transform:scaleX(0.9844);transform-origin:0 0;-webkit-text-stroke:0.3px #fff;">Remove Delivery Block Branch</span>
<span class="t" style="left:346.31px;top:58.69px;font-size:16.2px;line-height:16.2px;color:#111;transform:scaleX(1.0079);transform-origin:0 0;">Accountants Dashboard</span>
<span class="t" style="left:342.98px;top:113.03px;font-size:23px;line-height:23px;color:#000;transform:scaleX(1.0214);transform-origin:0 0;">Cashflow</span>
<span class="t" style="left:1140.87px;top:113.03px;font-size:23px;line-height:23px;color:#000;transform:scaleX(0.9919);transform-origin:0 0;">Daily Revenue</span>
<span class="t" style="left:343.07px;top:533.03px;font-size:23px;line-height:23px;color:#000;transform:scaleX(0.9870);transform-origin:0 0;">Orders in Process</span>
<span class="t" style="left:1142.09px;top:533.03px;font-size:23px;line-height:23px;color:#000;transform:scaleX(1.0094);transform-origin:0 0;">Cumulative Profit</span>
<span class="t" style="left:1141.08px;top:743.03px;font-size:23px;line-height:23px;color:#000;transform:scaleX(0.9875);transform-origin:0 0;">Revenue Stuck in Process</span>
<span class="t" style="left:356.55px;top:162.14px;font-size:12px;line-height:12px;color:#3a3a3a;transform:scaleX(1.0072);transform-origin:0 0;">Cash Flow (Base Case)</span>
<span class="t" style="left:506.55px;top:162.14px;font-size:12px;line-height:12px;color:#3a3a3a;transform:scaleX(1.0035);transform-origin:0 0;">Cash Flow (10% Headcount Reduction)</span>
<span class="t" style="left:740.15px;top:162.14px;font-size:12px;line-height:12px;color:#3a3a3a;transform:scaleX(1.0074);transform-origin:0 0;">Cash Flow (10% Annual Order Growth)</span>
<span class="t" style="left:460.89px;top:487.64px;font-size:12px;line-height:12px;color:#606060;">Oct</span>
<span class="t" style="left:544.08px;top:487.64px;font-size:12px;line-height:12px;color:#606060;font-weight:bold;">2023</span>
<span class="t" style="left:633.23px;top:487.64px;font-size:12px;line-height:12px;color:#606060;">Apr</span>
<span class="t" style="left:721.15px;top:487.64px;font-size:12px;line-height:12px;color:#606060;">Jul</span>
<span class="t" style="left:805.89px;top:487.64px;font-size:12px;line-height:12px;color:#606060;">Oct</span>
<span class="t" style="left:888.89px;top:487.64px;font-size:12px;line-height:12px;color:#606060;font-weight:bold;">2024</span>
<span class="t" style="left:979.18px;top:487.64px;font-size:12px;line-height:12px;color:#606060;">Apr</span>
<span class="t" style="left:1067.09px;top:487.64px;font-size:12px;line-height:12px;color:#606060;">Jul</span>
<span class="t" style="left:359.49px;top:197.04px;font-size:12px;line-height:12px;color:#606060;">1.2M</span>
<span class="t" style="left:369.51px;top:236.64px;font-size:12px;line-height:12px;color:#606060;">1M</span>
<span class="t" style="left:357.33px;top:276.24px;font-size:12px;line-height:12px;color:#606060;">800K</span>
<span class="t" style="left:357.33px;top:315.84px;font-size:12px;line-height:12px;color:#606060;">600K</span>
<span class="t" style="left:357.33px;top:355.44px;font-size:12px;line-height:12px;color:#606060;">400K</span>
<span class="t" style="left:357.33px;top:395.04px;font-size:12px;line-height:12px;color:#606060;">200K</span>
<span class="t" style="left:378.99px;top:434.64px;font-size:12px;line-height:12px;color:#606060;">0</span>
<span class="t" style="left:353.31px;top:474.24px;font-size:12px;line-height:12px;color:#606060;">-200K</span>
<span class="t" style="left:312.8px;top:334px;width:60px;text-align:center;font-size:12px;line-height:14px;font-weight:bold;color:#606060;transform:rotate(-90deg)">Days</span>
<span class="t" style="left:1155.65px;top:162.14px;font-size:12px;line-height:12px;color:#3a3a3a;transform:scaleX(1.0039);transform-origin:0 0;">Cumulative Revenue (Base Case)</span>
<span class="t" style="left:1360.25px;top:162.14px;font-size:12px;line-height:12px;color:#3a3a3a;transform:scaleX(1.0012);transform-origin:0 0;">Cumulative Revenue (10% Headcount Reduction)</span>
<span class="t" style="left:1648.55px;top:162.14px;font-size:12px;line-height:12px;color:#3a3a3a;transform:scaleX(1.0055);transform-origin:0 0;">Cumulative Revenue (10% Annu</span>
<span class="t" style="left:1258.86px;top:487.64px;font-size:12px;line-height:12px;color:#606060;">Oct</span>
<span class="t" style="left:1342.25px;top:487.64px;font-size:12px;line-height:12px;color:#606060;font-weight:bold;">2023</span>
<span class="t" style="left:1431.58px;top:487.64px;font-size:12px;line-height:12px;color:#606060;">Apr</span>
<span class="t" style="left:1519.69px;top:487.64px;font-size:12px;line-height:12px;color:#606060;">Jul</span>
<span class="t" style="left:1604.63px;top:487.64px;font-size:12px;line-height:12px;color:#606060;">Oct</span>
<span class="t" style="left:1687.82px;top:487.64px;font-size:12px;line-height:12px;color:#606060;font-weight:bold;">2024</span>
<span class="t" style="left:1778.30px;top:487.64px;font-size:12px;line-height:12px;color:#606060;">Apr</span>
<span class="t" style="left:1866.41px;top:487.64px;font-size:12px;line-height:12px;color:#606060;">Jul</span>
<span class="t" style="left:1152.96px;top:197.04px;font-size:12px;line-height:12px;color:#606060;">600M</span>
<span class="t" style="left:1152.96px;top:243.24px;font-size:12px;line-height:12px;color:#606060;">500M</span>
<span class="t" style="left:1152.96px;top:289.44px;font-size:12px;line-height:12px;color:#606060;">400M</span>
<span class="t" style="left:1152.96px;top:335.64px;font-size:12px;line-height:12px;color:#606060;">300M</span>
<span class="t" style="left:1152.96px;top:381.84px;font-size:12px;line-height:12px;color:#606060;">200M</span>
<span class="t" style="left:1152.96px;top:428.04px;font-size:12px;line-height:12px;color:#606060;">100M</span>
<span class="t" style="left:1175.79px;top:474.24px;font-size:12px;line-height:12px;color:#606060;">0</span>
<span class="t" style="left:1101.7px;top:334px;width:80px;text-align:center;font-size:12px;line-height:14px;font-weight:bold;color:#606060;transform:rotate(-90deg)">£ per Day</span>
<span class="t" style="left:1851.85px;top:162.14px;font-size:12px;line-height:12px;color:#3a3a3a;">1/2</span>
<span class="t" style="left:347.11px;top:564.22px;font-size:16.4px;line-height:16.4px;color:#111;transform:scaleX(0.9621);transform-origin:0 0;">Jul 11, 2024</span>
<span class="t" style="left:399.80px;top:858.97px;font-size:12px;line-height:12px;color:#626262;">2296</span>
<span class="t" style="left:458.22px;top:820.89px;font-size:12px;line-height:12px;color:#626262;">8513</span>
<span class="t" style="left:510.75px;top:668.05px;font-size:12px;line-height:12px;color:#626262;">34.17K</span>
<span class="t" style="left:569.20px;top:668.05px;font-size:12px;line-height:12px;color:#1a1a1a;">44.98K</span>
<span class="t" style="left:633.27px;top:858.97px;font-size:12px;line-height:12px;color:#626262;">2296</span>
<span class="t" style="left:691.68px;top:820.92px;font-size:12px;line-height:12px;color:#626262;">8508</span>
<span class="t" style="left:744.21px;top:667.91px;font-size:12px;line-height:12px;color:#626262;">34.21K</span>
<span class="t" style="left:802.67px;top:667.91px;font-size:12px;line-height:12px;color:#1a1a1a;">45.01K</span>
<span class="t" style="left:866.74px;top:857.40px;font-size:12px;line-height:12px;color:#626262;">2648</span>
<span class="t" style="left:919.09px;top:812.09px;font-size:12px;line-height:12px;color:#626262;">10.13K</span>
<span class="t" style="left:977.68px;top:636.15px;font-size:12px;line-height:12px;color:#626262;">39.33K</span>
<span class="t" style="left:1036.48px;top:636.15px;font-size:12px;line-height:12px;color:#1a1a1a;">52.11K</span>
<span class="t" style="left:354.59px;top:610.66px;font-size:12px;line-height:12px;color:#606060;">60K</span>
<span class="t" style="left:354.59px;top:655.39px;font-size:12px;line-height:12px;color:#606060;">50K</span>
<span class="t" style="left:354.59px;top:700.12px;font-size:12px;line-height:12px;color:#606060;">40K</span>
<span class="t" style="left:354.59px;top:744.85px;font-size:12px;line-height:12px;color:#606060;">30K</span>
<span class="t" style="left:354.59px;top:789.58px;font-size:12px;line-height:12px;color:#606060;">20K</span>
<span class="t" style="left:342.89px;top:834.31px;font-size:12px;line-height:12px;color:#606060;">10000</span>
<span class="t" style="left:369.59px;top:879.04px;font-size:12px;line-height:12px;color:#606060;">0</span>
<span class="t" style="left:303.3px;top:743.8px;width:60px;text-align:center;font-size:12px;line-height:14px;font-weight:bold;color:#606060;transform:rotate(-90deg)">Orders</span>
<span class="t" style="left:1145.86px;top:566.09px;font-size:18.2px;line-height:18.2px;color:#000;transform:scaleX(1.0494);transform-origin:0 0;">Jul 11, 2024</span>
<span class="t" style="left:1143.97px;top:588.94px;font-size:26.3px;line-height:26.3px;color:#377eb8;transform:scaleX(1.0051);transform-origin:0 0;">Base Case:</span>
<span class="t" style="left:1286.76px;top:588.94px;font-size:26.3px;line-height:26.3px;color:#377eb8;font-weight:bold;transform:scaleX(1.1231);transform-origin:0 0;">537.2M</span>
<span class="t" style="left:1144.12px;top:622.94px;font-size:26.3px;line-height:26.3px;color:#e41a1c;transform:scaleX(1.0289);transform-origin:0 0;">10% Headcount Reduction:</span>
<span class="t" style="left:1480.46px;top:622.94px;font-size:26.3px;line-height:26.3px;color:#e41a1c;font-weight:bold;transform:scaleX(1.1231);transform-origin:0 0;">537.9M</span>
<span class="t" style="left:1577.45px;top:622.94px;font-size:26.3px;line-height:26.3px;color:#e41a1c;transform:scaleX(1.2139);transform-origin:0 0;">(+</span>
<span class="t" style="left:1605.65px;top:622.94px;font-size:26.3px;line-height:26.3px;color:#e41a1c;font-weight:bold;transform:scaleX(1.0720);transform-origin:0 0;">727K</span>
<span class="t" style="left:1673.55px;top:622.94px;font-size:26.3px;line-height:26.3px;color:#e41a1c;">)</span>
<span class="t" style="left:1144.14px;top:656.94px;font-size:26.3px;line-height:26.3px;color:#4daf4a;transform:scaleX(1.0208);transform-origin:0 0;">10% Annual Order Growth:</span>
<span class="t" style="left:1471.83px;top:656.94px;font-size:26.3px;line-height:26.3px;color:#4daf4a;font-weight:bold;transform:scaleX(1.1688);transform-origin:0 0;">560.5M</span>
<span class="t" style="left:1573.49px;top:656.94px;font-size:26.3px;line-height:26.3px;color:#4daf4a;transform:scaleX(1.1903);transform-origin:0 0;">(+</span>
<span class="t" style="left:1601.11px;top:656.94px;font-size:26.3px;line-height:26.3px;color:#4daf4a;font-weight:bold;transform:scaleX(1.1342);transform-origin:0 0;">23.32M</span>
<span class="t" style="left:1701.05px;top:656.94px;font-size:26.3px;line-height:26.3px;color:#4daf4a;">)</span>
<span class="t" style="left:1145.86px;top:776.09px;font-size:18.2px;line-height:18.2px;color:#000;transform:scaleX(1.0494);transform-origin:0 0;">Jul 11, 2024</span>
<span class="t" style="left:1143.97px;top:798.94px;font-size:26.3px;line-height:26.3px;color:#377eb8;transform:scaleX(1.0051);transform-origin:0 0;">Base Case:</span>
<span class="t" style="left:1286.05px;top:798.94px;font-size:26.3px;line-height:26.3px;color:#377eb8;font-weight:bold;transform:scaleX(1.1558);transform-origin:0 0;">13.49M</span>
<span class="t" style="left:1144.12px;top:832.94px;font-size:26.3px;line-height:26.3px;color:#e41a1c;transform:scaleX(1.0289);transform-origin:0 0;">10% Headcount Reduction:</span>
<span class="t" style="left:1478.71px;top:832.94px;font-size:26.3px;line-height:26.3px;color:#e41a1c;font-weight:bold;transform:scaleX(1.1181);transform-origin:0 0;">13.5M</span>
<span class="t" style="left:1144.14px;top:866.94px;font-size:26.3px;line-height:26.3px;color:#4daf4a;transform:scaleX(1.0208);transform-origin:0 0;">10% Annual Order Growth:</span>
<span class="t" style="left:1470.29px;top:866.94px;font-size:26.3px;line-height:26.3px;color:#4daf4a;font-weight:bold;transform:scaleX(1.1333);transform-origin:0 0;">15.63M</span>
</div>
</body></html>
